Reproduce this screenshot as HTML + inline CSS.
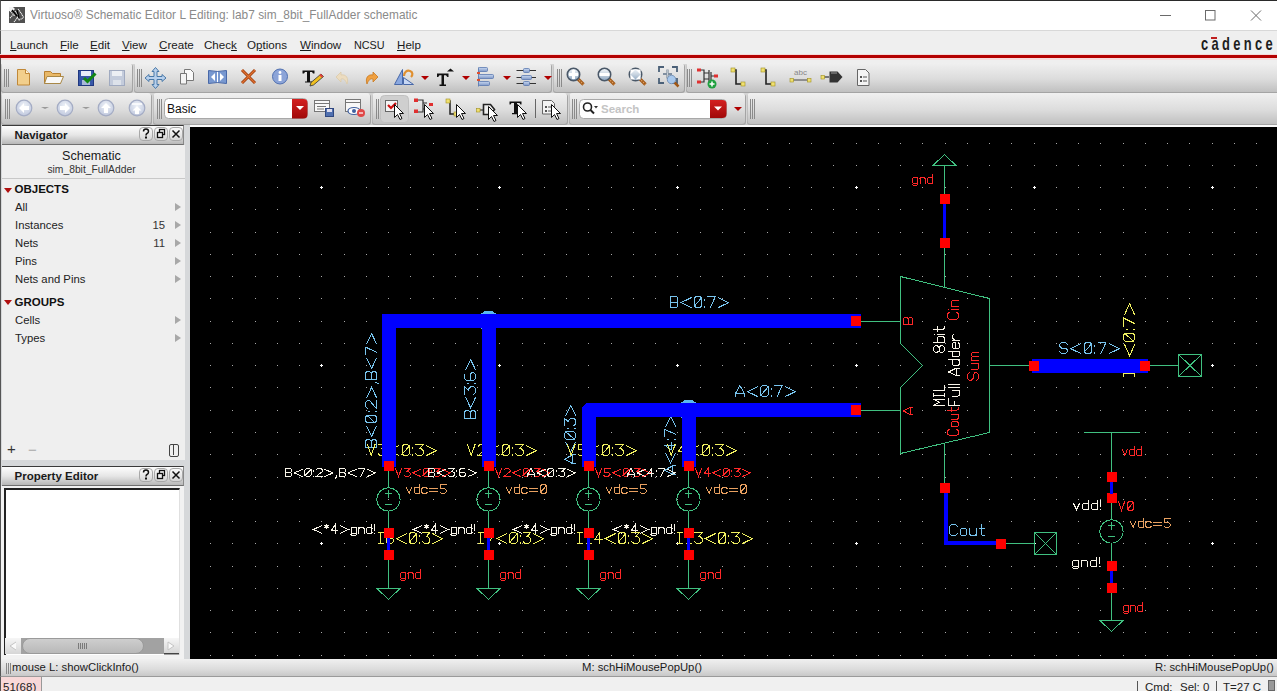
<!DOCTYPE html>
<html><head><meta charset="utf-8"><title>Virtuoso Schematic Editor</title>
<style>
*{box-sizing:border-box}
html,body{margin:0;padding:0}
body{width:1277px;height:691px;overflow:hidden;position:relative;background:#d4d4d4;font-family:"Liberation Sans",sans-serif;color:#222}
.a{position:absolute}
#title{left:0;top:0;width:1277px;height:30px;background:#fff;border-top:1px solid #2a2a2a;border-left:1px solid #555}
#title .t{left:29px;top:7px;font-size:11.85px;color:#8a8a8a;white-space:nowrap;letter-spacing:0.05px}
#menu{left:0;top:30px;width:1277px;height:25px;background:#efefef;border-left:1px solid #555;border-top:1px solid #d8d8d8}
#menu span{position:absolute;top:7px;font-size:11.6px;color:#1a1a1a;white-space:nowrap}
#redline{left:0;top:55px;width:1277px;height:3.5px;background:#b40000;box-shadow:0 -1px 0 #f4d8d8}
#tb{left:0;top:58px;width:1277px;height:69px;background:#d2d2d2;border-left:1px solid #555}
.grp{position:absolute;border-radius:3px;background:linear-gradient(#f4f4f4,#e6e6e6 45%,#d6d6d6);box-shadow:inset -1px -1px 0 #b4b4b4, inset 1px 1px 0 #fafafa}
.grip{position:absolute;width:5px;height:18px;border-left:1px solid #7a7a7a;border-right:1px solid #7a7a7a}
.grip:after{content:"";position:absolute;left:1px;top:0;width:1px;height:18px;background:#7a7a7a}
.ic{position:absolute}
#dock{left:0;top:125px;width:190px;height:534px;background:#d6d8da;border-left:1px solid #555}
.hdr{position:absolute;left:1px;width:182px;height:20px;border-right:1px solid #8a8a8a;background:linear-gradient(#fdfdfd,#e6e6e6 50%,#b8b8b8);border-top:1px solid #3a3a3a;border-bottom:1px solid #707070}
.hdr b{position:absolute;left:12.5px;top:3px;font-size:11.5px;color:#1a1a1a}
.hb{position:absolute;top:2px;width:14px;height:13px;border:1px solid #9a9a9a;border-radius:3px;background:linear-gradient(#fff,#d8d8d8);font-size:11px;line-height:11px;text-align:center;color:#111;font-weight:bold}
#nav{left:1px;top:20px;width:183px;height:315px;background:#efefef}
.it{position:absolute;left:13px;font-size:11.3px;color:#222;white-space:nowrap}
.num{position:absolute;left:148px;font-size:11.3px;color:#333;width:15px;text-align:right}
.arr{position:absolute;left:173px;width:0;height:0;border-top:4px solid transparent;border-bottom:4px solid transparent;border-left:6px solid #a8a8a8}
.sec{position:absolute;left:12.5px;font-size:11.5px;font-weight:bold;color:#111}
.tri{position:absolute;left:1.5px;width:0;height:0;border-left:4px solid transparent;border-right:4px solid transparent;border-top:5px solid #b01010}
#status{left:0;top:659px;width:1277px;height:18px;background:linear-gradient(#f0f0f0,#dcdcdc 60%,#c8c8c8);border-bottom:1px solid #9a9a9a;border-left:1px solid #555}
#status span{position:absolute;top:2px;font-size:11.3px;color:#1a1a1a;white-space:nowrap}
#bot{left:0;top:677px;width:1277px;height:14px;background:#f0f0f0;border-left:1px solid #555}
#bot span{position:absolute;top:4px;font-size:11.5px;color:#222;white-space:nowrap}
.cv{position:absolute;left:190px;top:127px}
</style></head><body>
<div id="title" class="a">
  <svg class="a" style="left:8px;top:6px" width="16" height="16" viewBox="0 0 16 16"><rect x="0" y="0" width="16" height="16" fill="#505050"/><path d="M0 0h4l2 2l-2 2l-4 0z" fill="#f4f4f4"/><path d="M1 4l5 5M1 11l4-4M5 15l4-5M6 4l4 6M9 2l3 4l3 5M8 10l2 3l4-2" stroke="#f0f0f0" stroke-width="1.1" stroke-dasharray="1.2 0.6" fill="none"/><path d="M3 3l5 6M8 3l2 8" stroke="#000" stroke-width="1.2"/></svg>
  <div class="a t">Virtuoso® Schematic Editor L Editing: lab7 sim_8bit_FullAdder schematic</div>
  <svg class="a" style="left:1159px;top:8px" width="110" height="14" viewBox="0 0 110 14"><path d="M0 6.5H11" stroke="#6a6a6a" stroke-width="1"/><rect x="45.5" y="1.5" width="9.5" height="9.5" stroke="#6a6a6a" fill="none"/><path d="M91 1.5L101 11.5M101 1.5L91 11.5" stroke="#6a6a6a" stroke-width="1"/></svg>
</div>
<div id="menu" class="a">
  <span style="left:9px"><u>L</u>aunch</span>
  <span style="left:59px"><u>F</u>ile</span>
  <span style="left:89px"><u>E</u>dit</span>
  <span style="left:121px"><u>V</u>iew</span>
  <span style="left:158px"><u>C</u>reate</span>
  <span style="left:203px">Chec<u>k</u></span>
  <span style="left:246px">O<u>p</u>tions</span>
  <span style="left:299px"><u>W</u>indow</span>
  <span style="left:353px;top:8px;font-size:10.8px">NCSU</span>
  <span style="left:396px"><u>H</u>elp</span>
  <span style="left:1200px;top:2px;font-size:19px;font-weight:bold;letter-spacing:4.9px;color:#1e1e1e;transform:scaleX(0.68);transform-origin:0 0">cadence</span><div class="a" style="left:1210px;top:6px;width:6px;height:2px;background:#c02020"></div>
</div>
<div id="redline" class="a"></div>
<svg class="a" style="left:0;top:58px" width="1277" height="69" viewBox="0 58 1277 69"><defs><linearGradient id="gg" x1="0" y1="0" x2="0" y2="1"><stop offset="0" stop-color="#f0f0f0"/><stop offset="0.55" stop-color="#dcdcdc"/><stop offset="1" stop-color="#c0c0c0"/></linearGradient><linearGradient id="gb" x1="0" y1="0" x2="0" y2="1"><stop offset="0" stop-color="#f4f4f4"/><stop offset="1" stop-color="#cfcfcf"/></linearGradient><linearGradient id="rb" x1="0" y1="0" x2="0" y2="1"><stop offset="0" stop-color="#d42020"/><stop offset="1" stop-color="#a00808"/></linearGradient><radialGradient id="cg" cx="0.5" cy="0.35" r="0.6"><stop offset="0" stop-color="#eef2f8"/><stop offset="1" stop-color="#c4cce0"/></radialGradient><linearGradient id="bl" x1="0" y1="0" x2="0" y2="1"><stop offset="0" stop-color="#c8d8f0"/><stop offset="1" stop-color="#8098c8"/></linearGradient></defs><rect x="0" y="58" width="1277" height="69" fill="#d4d4d4"/><rect x="0" y="58" width="1277" height="6" fill="#efefef"/><rect x="0" y="58" width="1277" height="2" fill="#f6dcdc"/><rect x="0" y="124" width="1277" height="3" fill="#c4c4c4"/><rect x="190" y="125" width="1087" height="2" fill="#fafafa"/><rect x="1" y="64" width="132" height="29" rx="3" fill="#a4a4a4"/><rect x="1.5" y="63" width="130.5" height="29" rx="3" fill="url(#gg)"/><rect x="134" y="64" width="418" height="29" rx="3" fill="#a4a4a4"/><rect x="134.5" y="63" width="416.5" height="29" rx="3" fill="url(#gg)"/><rect x="553" y="64" width="132" height="29" rx="3" fill="#a4a4a4"/><rect x="553.5" y="63" width="130.5" height="29" rx="3" fill="url(#gg)"/><rect x="686" y="64" width="595" height="29" rx="3" fill="#a4a4a4"/><rect x="686.5" y="63" width="593.5" height="29" rx="3" fill="url(#gg)"/><rect x="1" y="94" width="151" height="31" rx="3" fill="#a4a4a4"/><rect x="1.5" y="93" width="149.5" height="31" rx="3" fill="url(#gg)"/><rect x="153" y="94" width="218" height="31" rx="3" fill="#a4a4a4"/><rect x="153.5" y="93" width="216.5" height="31" rx="3" fill="url(#gg)"/><rect x="372" y="94" width="196" height="31" rx="3" fill="#a4a4a4"/><rect x="372.5" y="93" width="194.5" height="31" rx="3" fill="url(#gg)"/><rect x="569" y="94" width="177" height="31" rx="3" fill="#a4a4a4"/><rect x="569.5" y="93" width="175.5" height="31" rx="3" fill="url(#gg)"/><rect x="747" y="94" width="534" height="31" rx="3" fill="#a4a4a4"/><rect x="747.5" y="93" width="532.5" height="31" rx="3" fill="url(#gg)"/><path d="M4.5 69V87M6.5 69V87M8.5 69V87" stroke="#8a8a8a" stroke-width="1"/><path d="M137.5 69V87M139.5 69V87M141.5 69V87" stroke="#8a8a8a" stroke-width="1"/><path d="M557.5 69V87M559.5 69V87M561.5 69V87" stroke="#8a8a8a" stroke-width="1"/><path d="M687.5 69V87M689.5 69V87M691.5 69V87" stroke="#8a8a8a" stroke-width="1"/><path d="M5.5 99V119M7.5 99V119M9.5 99V119" stroke="#8a8a8a" stroke-width="1"/><path d="M157.5 99V119M159.5 99V119M161.5 99V119" stroke="#8a8a8a" stroke-width="1"/><path d="M376.5 99V119M378.5 99V119M380.5 99V119" stroke="#8a8a8a" stroke-width="1"/><path d="M572.5 99V119M574.5 99V119M576.5 99V119" stroke="#8a8a8a" stroke-width="1"/><path d="M750.5 99V119M752.5 99V119M754.5 99V119" stroke="#8a8a8a" stroke-width="1"/><rect x="0" y="58" width="1" height="69" fill="#555"/><path d="M17.5 69.5h8l4 4v11.5h-12z" fill="#f2cf8c" stroke="#c08838"/><path d="M25.5 69.5v4h4" fill="#fff3d8" stroke="#c08838"/><path d="M44.5 71.5h6l2 2h8v10h-16z" fill="#e8b868" stroke="#b88030"/><path d="M47 76.5h16.5l-3 7h-16z" fill="#f8f8f8" stroke="#a88848"/><rect x="78.5" y="70.5" width="15" height="15" fill="#3858a8" stroke="#203880"/><rect x="81" y="71" width="10" height="5" fill="#e8eef8"/><rect x="82" y="80" width="8" height="5" fill="#a8b8d8"/><path d="M84 78l3.5 3.5l8-8" stroke="#118811" stroke-width="3" fill="none"/><rect x="109.5" y="70.5" width="15" height="15" fill="#c4ccdc" stroke="#a0aac0"/><rect x="112" y="71" width="10" height="5" fill="#eceff4"/><rect x="113" y="80" width="8" height="5" fill="#dde2ea"/><path d="M155.5 67.5l3.5 4h-2v5h5v-2l4 3.5l-4 3.5v-2h-5v5h2l-3.5 4l-3.5-4h2v-5h-5v2l-4-3.5l4-3.5v2h5v-5h-2z" fill="#b8d0ec" stroke="#4878a8"/><path d="M184.5 69.5h6l3 3v8h-9z" fill="#fafafa" stroke="#777"/><path d="M180.5 73.5h6l0 0v10.5h-6z" fill="#f4f4f4" stroke="#777"/><path d="M208.5 70.5q9 2 18 0v13q-9-2-18 0z" fill="#7898d0" stroke="#4868a8"/><path d="M211 77l4-4v8zM224 77l-4-4v8z" fill="#fff"/><path d="M217.5 72v10" stroke="#fff"/><path d="M242 70l13 13M255 70l-13 13" stroke="#a04010" stroke-width="3"/><path d="M242 70l13 13M255 70l-13 13" stroke="#e07030" stroke-width="1.2"/><circle cx="280" cy="76.5" r="7.5" fill="#8ca4d8" stroke="#5070b0"/><rect x="278.5" y="75" width="3" height="6" fill="#fff"/><circle cx="280" cy="72.5" r="1.4" fill="#fff"/><path d="M302.5 70.5h12v3h-1.5l-1-1.5h-2v9.5h2v1h-7v-1h2v-9.5h-2l-1 1.5h-1.5z" fill="#111"/><path d="M310 86l1-3.5l10-8.5l2.5 2.5l-10 8.5z" fill="#f0c020" stroke="#303030" stroke-width="0.8"/><path d="M320 74.5l2.5 2.5" stroke="#e04040" stroke-width="2"/><path d="M347 84c2-6-1-10-6-9v-3l-5 5l5 5v-3c3-1 5 2 6 5z" fill="#ecdcc0" stroke="#dccaa8" stroke-width="0.8"/><path d="M367 84c-2-6 1-10 6-9v-3l5 5l-5 5v-3c-3-1-5 2-6 5z" fill="#f0a040" stroke="#c87820" stroke-width="0.8"/><path d="M394.5 84.5l8-15v15z" fill="#8aa8e0" stroke="#4868a8"/><path d="M403.5 84.5h10l-10-7z" fill="#c8d8f4" stroke="#4868a8"/><path d="M404 76c0-4 3-6 6-5s3 4 1 6" stroke="#e09030" stroke-width="2.2" fill="none"/><path d="M421 76h8l-4 4z" fill="#b00000"/><path d="M437 73.5h11.5v3.5h-1.2l-1.3-1.8h-2v9.3h2v1.5h-6.5v-1.5h2v-9.3h-2l-1.3 1.8h-1.2z" fill="#111"/><path d="M447 71.5l3.5-3l3.5 3z" fill="#111"/><path d="M462 76h8l-4 4z" fill="#b00000"/><path d="M478.5 67.5v19" stroke="#6080b0"/><rect x="478.5" y="67.5" width="9" height="4" rx="1" fill="url(#bl)" stroke="#5a78b0" stroke-width="0.8"/><rect x="478.5" y="74.5" width="15" height="4" rx="1" fill="url(#bl)" stroke="#5a78b0" stroke-width="0.8"/><rect x="478.5" y="81.5" width="11" height="4" rx="1" fill="url(#bl)" stroke="#5a78b0" stroke-width="0.8"/><rect x="477" y="72" width="3" height="2" fill="#e05030"/><rect x="477" y="79" width="3" height="2" fill="#e05030"/><path d="M503 76h8l-4 4z" fill="#b00000"/><path d="M516.5 70.5H536" stroke="#333"/><path d="M516.5 77.5H536" stroke="#333"/><path d="M516.5 83.5H536" stroke="#333"/><rect x="523.5" y="68.5" width="6" height="4" rx="1" fill="url(#bl)" stroke="#5a78b0" stroke-width="0.8"/><rect x="521.5" y="75.5" width="10" height="4" rx="1" fill="url(#bl)" stroke="#5a78b0" stroke-width="0.8"/><rect x="523.5" y="81.5" width="6" height="4" rx="1" fill="url(#bl)" stroke="#5a78b0" stroke-width="0.8"/><path d="M544 76h8l-4 4z" fill="#b00000"/><defs><linearGradient id="lens" x1="0" y1="0" x2="0" y2="1"><stop offset="0" stop-color="#f4f8fc"/><stop offset="0.5" stop-color="#c8d4e0"/><stop offset="1" stop-color="#8aa4c0"/></linearGradient></defs><path d="M577.5 78.5l6 6" stroke="#a05818" stroke-width="3.2"/><path d="M577.5 78.5l6 6" stroke="#e0a060" stroke-width="1.2" stroke-dasharray="1.5 1"/><circle cx="573.5" cy="74.5" r="6.2" fill="url(#lens)" stroke="#4a5868" stroke-width="1.6"/><path d="M569 74.5h9M573.5 70v9" stroke="#fff" stroke-width="3"/><path d="M608.5 78.5l6 6" stroke="#a05818" stroke-width="3.2"/><path d="M608.5 78.5l6 6" stroke="#e0a060" stroke-width="1.2" stroke-dasharray="1.5 1"/><circle cx="604.5" cy="74.5" r="6.2" fill="url(#lens)" stroke="#4a5868" stroke-width="1.6"/><path d="M599.5 74.5h10" stroke="#fff" stroke-width="3"/><path d="M639.5 78.5l6 6" stroke="#a05818" stroke-width="3.2"/><path d="M639.5 78.5l6 6" stroke="#e0a060" stroke-width="1.2" stroke-dasharray="1.5 1"/><circle cx="635.5" cy="74.5" r="6.2" fill="url(#lens)" stroke="#4a5868" stroke-width="1.6"/><path d="M631 70l3 0l-3 3zM640 70l-3 0l3 3zM631 79l3 0l-3-3zM640 79l-3 0l3-3z" fill="#fff" stroke="#fff" stroke-width="1.2"/><path d="M659 72v-5h5M672 67h5v5M677 78v5h-5M664 83h-5v-5" stroke="#4a6078" stroke-width="1.8" fill="none"/><path d="M663 74h9M667.5 69.5v9" stroke="#4a6078" stroke-width="1.8"/><path d="M663 74h9M667.5 69.5v9" stroke="#fff" stroke-width="0.6"/><path d="M674 82l4.5 4.5" stroke="#a05818" stroke-width="2.5"/><circle cx="671.5" cy="79.5" r="4.2" fill="#a8c8ec" stroke="#6888b0" stroke-width="0.8"/><path d="M698 70h6v12h-6M704 73h5M704 79h5M709 70v12M711 72v8M711 76h5" stroke="#333" stroke-width="1.2" fill="none"/><rect x="697" y="68.5" width="4" height="3" fill="#e03030"/><rect x="697" y="80.5" width="4" height="3" fill="#e03030"/><rect x="714" y="74.5" width="4" height="3" fill="#e03030"/><circle cx="712" cy="84" r="4.5" fill="#20a040"/><path d="M709.5 84h5M712 81.5v5" stroke="#fff" stroke-width="1.5"/><path d="M733 70h3v14h5" stroke="#222" stroke-width="1.6" fill="none"/><rect x="731" y="68" width="4" height="4" fill="#f0e070" stroke="#a09020" stroke-width="0.6"/><rect x="741" y="82" width="4" height="4" fill="#f0e070" stroke="#a09020" stroke-width="0.6"/><path d="M763 70h3v14h5" stroke="#222" stroke-width="1.6" fill="none"/><rect x="761" y="68" width="4" height="4" fill="#f0e070" stroke="#a09020" stroke-width="0.6"/><rect x="771" y="82" width="4" height="4" fill="#f0e070" stroke="#a09020" stroke-width="0.6"/><text x="800.5" y="75" font-size="8" text-anchor="middle" fill="#888" font-family="Liberation Sans">abc</text><path d="M792 80h17" stroke="#444"/><rect x="790" y="78.5" width="3.5" height="3.5" fill="#f0e070" stroke="#a09020" stroke-width="0.6"/><rect x="807.5" y="78.5" width="3.5" height="3.5" fill="#f0e070" stroke="#a09020" stroke-width="0.6"/><path d="M823 77h6" stroke="#333" stroke-width="1.2"/><rect x="821" y="75.5" width="3.5" height="3.5" fill="#f0e070" stroke="#a09020" stroke-width="0.6"/><path d="M829.5 71.5h8l5 5.5l-5 5.5h-8z" fill="#333"/><path d="M831 73h6" stroke="#999"/><path d="M857.5 69.5h8l3.5 3.5v12.5h-11.5z" fill="#f4f4f4" stroke="#666"/><rect x="860" y="76" width="2" height="2" fill="#555"/><rect x="860" y="80" width="2" height="2" fill="#555"/><path d="M863 77h4M863 81h4" stroke="#555"/><circle cx="24" cy="108" r="7.8" fill="url(#cg)" stroke="#a4acc4" stroke-width="1.2"/><path d="M19 108l5-5v3h5v4h-5v3z" fill="#fff"/><circle cx="65" cy="108" r="7.8" fill="url(#cg)" stroke="#a4acc4" stroke-width="1.2"/><path d="M70 108l-5-5v3h-5v4h5v3z" fill="#fff"/><circle cx="106" cy="108" r="7.8" fill="url(#cg)" stroke="#a4acc4" stroke-width="1.2"/><path d="M106 103l5 5h-3v5h-4v-5h-3z" fill="#fff"/><circle cx="137" cy="108" r="7.8" fill="url(#cg)" stroke="#a4acc4" stroke-width="1.2"/><path d="M137 106l4.5 4.5h-2.5v3.5h-4v-3.5h-2.5z" fill="#fff"/><path d="M132 104h10" stroke="#fff" stroke-width="1.5"/><path d="M41 107h8l-4 2z" fill="#999"/><path d="M82 107h8l-4 2z" fill="#999"/><rect x="164.5" y="98.5" width="143" height="20" rx="4" fill="#fff" stroke="#a8a8a8"/><path d="M292 99h11.5q4 0 4 4v11.5q0 4-4 4h-11.5z" fill="url(#rb)"/><path d="M296 106h8l-4 4z" fill="#fff"/><text x="167" y="113" font-size="12" fill="#111" font-family="Liberation Sans">Basic</text><rect x="314.5" y="100.5" width="15" height="11" fill="#f8f8f8" stroke="#777"/><path d="M315 103.5h14M317 106.5h9M317 109h7" stroke="#777"/><rect x="325.5" y="108.5" width="8" height="8" fill="#5070b0" stroke="#304880"/><rect x="327" y="109" width="5" height="3" fill="#dde"/><rect x="345.5" y="99.5" width="15" height="12" fill="#f8f8f8" stroke="#777"/><path d="M346 102.5h14" stroke="#777"/><ellipse cx="354" cy="111" rx="6" ry="3.5" fill="#fff" stroke="#4060a0" stroke-width="1.2"/><circle cx="354" cy="111" r="2" fill="#4060a0"/><circle cx="361" cy="113" r="4" fill="#e04848"/><path d="M359 113h4" stroke="#fff" stroke-width="1.2"/><rect x="380.5" y="95.5" width="28" height="27" rx="4" fill="#cfcfcf" stroke="#c0c0c0"/><rect x="385.5" y="100.5" width="12" height="11" fill="#f4f4f4" stroke="#666"/><path d="M388 105l3 3l5-5" stroke="#d01010" stroke-width="2.2" fill="none"/><path d="M394.5 104.5v13l3-3l2.5 5l2-1l-2.5-5h4z" fill="#fff" stroke="#111" stroke-width="1"/><path d="M417 100h6v12h-6M423 103h4M423 109h4" stroke="#333" stroke-width="1.2" fill="none"/><rect x="414" y="98.5" width="4" height="3.5" fill="#e03030"/><rect x="414" y="109.5" width="4" height="3.5" fill="#e03030"/><rect x="429" y="103" width="4" height="3" fill="#e03030"/><path d="M424.5 104.5v13l3-3l2.5 5l2-1l-2.5-5h4z" fill="#fff" stroke="#111" stroke-width="1"/><path d="M448 101h2v13h5" stroke="#222" stroke-width="1.5" fill="none"/><rect x="446" y="99" width="4" height="4" fill="#f0e070" stroke="#a09020" stroke-width="0.6"/><rect x="454" y="112" width="4" height="4" fill="#f0e070" stroke="#a09020" stroke-width="0.6"/><path d="M456.5 104.5v13l3-3l2.5 5l2-1l-2.5-5h4z" fill="#fff" stroke="#111" stroke-width="1"/><path d="M478 110h5" stroke="#333" stroke-width="1.2"/><rect x="476.5" y="108.5" width="3.5" height="3.5" fill="#f0e070" stroke="#a09020" stroke-width="0.6"/><path d="M483.5 104.5h7l4 5l-4 5h-7z" fill="#eee" stroke="#222" stroke-width="1.6"/><path d="M488.5 106.5v13l3-3l2.5 5l2-1l-2.5-5h4z" fill="#fff" stroke="#111" stroke-width="1"/><path d="M509.5 101.5h12v3h-1l-1-1.5h-2.5v10h2v1.2h-7v-1.2h2v-10h-2.5l-1 1.5h-1z" fill="#111"/><path d="M517.5 104.5v13l3-3l2.5 5l2-1l-2.5-5h4z" fill="#fff" stroke="#111" stroke-width="1"/><path d="M535.5 99v19" stroke="#666"/><path d="M542.5 100.5h9l3 3v10.5h-12z" fill="#f2f2f2" stroke="#666"/><rect x="545" y="106" width="2" height="2" fill="#555"/><rect x="545" y="110" width="2" height="2" fill="#555"/><path d="M548 107h4M548 111h4" stroke="#555"/><path d="M551.5 104.5v13l3-3l2.5 5l2-1l-2.5-5h4z" fill="#fff" stroke="#111" stroke-width="1"/><rect x="579.5" y="99.5" width="147" height="19" rx="4" fill="#fff" stroke="#a8a8a8"/><path d="M710 100h12.5q4 0 4 4v10q0 4-4 4h-12.5z" fill="url(#rb)"/><path d="M714 106.5h8l-4 4z" fill="#fff"/><circle cx="587.5" cy="107" r="4" fill="#fff" stroke="#222" stroke-width="1.6"/><path d="M590.5 110l3.5 3.5" stroke="#222" stroke-width="2"/><path d="M594 106h4l-2 2.5z" fill="#333"/><text x="601" y="112.5" font-size="11.5" font-weight="bold" fill="#c4c4c4" font-family="Liberation Sans">Search</text><path d="M734 107h8l-4 4z" fill="#b00000"/></svg>
<div id="dock" class="a">
  <div class="hdr" style="top:0"><b>Navigator</b>
    <svg class="a" style="left:136px;top:0px" width="46" height="16" viewBox="0 0 46 16"><defs><linearGradient id="hbg" x1="0" y1="0" x2="0" y2="1"><stop offset="0" stop-color="#fcfcfc"/><stop offset="1" stop-color="#d4d4d4"/></linearGradient></defs><rect x="1.5" y="1.5" width="13" height="13" rx="3.5" fill="url(#hbg)" stroke="#a8a8a8"/><rect x="16.5" y="1.5" width="13" height="13" rx="3.5" fill="url(#hbg)" stroke="#a8a8a8"/><rect x="31.5" y="1.5" width="13" height="13" rx="3.5" fill="url(#hbg)" stroke="#a8a8a8"/><path d="M5.5 5.5q0-2.5 2.5-2.5t2.5 2.3q0 1.5-1.5 2.2q-1 .5-1 2" stroke="#111" stroke-width="1.5" fill="none"/><rect x="7" y="10.5" width="2" height="2" fill="#111"/><rect x="21.5" y="3.5" width="5" height="5" fill="none" stroke="#111" stroke-width="1.3"/><rect x="19.5" y="6.5" width="5" height="5" fill="#f0f0f0" stroke="#111" stroke-width="1.3"/><path d="M34.5 4.5l7 7M41.5 4.5l-7 7" stroke="#111" stroke-width="1.5"/></svg></div>
  <div id="nav" class="a">
    <div class="a" style="left:-2px;top:4px;width:183px;text-align:center;font-size:12.6px;color:#1a1a1a">Schematic</div>
    <div class="a" style="left:-2px;top:19px;width:183px;text-align:center;font-size:10.3px;color:#333">sim_8bit_FullAdder</div>
    <div class="a" style="left:0;top:33px;width:183px;height:1px;background:#c8c8c8"></div>
    <div class="tri" style="top:43px"></div><div class="sec" style="top:38px">OBJECTS</div>
    <div class="it" style="top:56px">All</div><div class="arr" style="top:58px"></div>
    <div class="it" style="top:74px">Instances</div><div class="num" style="top:74px">15</div><div class="arr" style="top:76px"></div>
    <div class="it" style="top:92px">Nets</div><div class="num" style="top:92px">11</div><div class="arr" style="top:94px"></div>
    <div class="it" style="top:110px">Pins</div><div class="arr" style="top:112px"></div>
    <div class="it" style="top:128px">Nets and Pins</div><div class="arr" style="top:130px"></div>
    <div class="tri" style="top:155px"></div><div class="sec" style="top:151px">GROUPS</div>
    <div class="it" style="top:169px">Cells</div><div class="arr" style="top:171px"></div>
    <div class="it" style="top:187px">Types</div><div class="arr" style="top:189px"></div>
    <div class="a" style="left:5px;top:295px;font-size:15px;color:#333">+</div>
    <div class="a" style="left:26px;top:296px;font-size:15px;color:#aaa">&#x2212;</div>
    <div class="a" style="left:167px;top:299px;width:10px;height:13px;border:1.5px solid #444;border-radius:2px"><div class="a" style="left:3px;top:0;width:1.2px;height:10px;background:#444"></div></div>
  </div>
  <div class="hdr" style="top:341px"><b>Property Editor</b>
    <svg class="a" style="left:136px;top:0px" width="46" height="16" viewBox="0 0 46 16"><defs><linearGradient id="hbg" x1="0" y1="0" x2="0" y2="1"><stop offset="0" stop-color="#fcfcfc"/><stop offset="1" stop-color="#d4d4d4"/></linearGradient></defs><rect x="1.5" y="1.5" width="13" height="13" rx="3.5" fill="url(#hbg)" stroke="#a8a8a8"/><rect x="16.5" y="1.5" width="13" height="13" rx="3.5" fill="url(#hbg)" stroke="#a8a8a8"/><rect x="31.5" y="1.5" width="13" height="13" rx="3.5" fill="url(#hbg)" stroke="#a8a8a8"/><path d="M5.5 5.5q0-2.5 2.5-2.5t2.5 2.3q0 1.5-1.5 2.2q-1 .5-1 2" stroke="#111" stroke-width="1.5" fill="none"/><rect x="7" y="10.5" width="2" height="2" fill="#111"/><rect x="21.5" y="3.5" width="5" height="5" fill="none" stroke="#111" stroke-width="1.3"/><rect x="19.5" y="6.5" width="5" height="5" fill="#f0f0f0" stroke="#111" stroke-width="1.3"/><path d="M34.5 4.5l7 7M41.5 4.5l-7 7" stroke="#111" stroke-width="1.5"/></svg></div>
  <div class="a" style="left:0px;top:361px;width:183px;height:173px;background:#f2f2f2">
    <div class="a" style="left:3px;top:2px;width:176px;height:167px;background:#fff;border-top:2px solid #222;border-left:2px solid #222;border-right:1px solid #e0e0e0"></div>
    <svg class="a" style="left:4px;top:152px" width="174" height="17" viewBox="0 0 174 17">
      <defs><linearGradient id="sbb" x1="0" y1="0" x2="0" y2="1"><stop offset="0" stop-color="#f6f6f6"/><stop offset="1" stop-color="#d6d6d6"/></linearGradient>
      <linearGradient id="sbt" x1="0" y1="0" x2="0" y2="1"><stop offset="0" stop-color="#cfcfcf"/><stop offset="1" stop-color="#b8b8b8"/></linearGradient></defs>
      <rect x="0" y="0" width="174" height="16" fill="#a2a2a2"/>
      <rect x="0" y="0" width="16" height="16" fill="url(#sbb)"/>
      <path d="M11 4L5 8L11 12" fill="#fafafa" stroke="#c4c4c4"/>
      <rect x="17.5" y="0.5" width="121" height="15" rx="7.5" fill="url(#sbt)" stroke="#9a9a9a"/>
      <path d="M73.5 5v6M75.5 5v6M77.5 5v6M79.5 5v6M81.5 5v6" stroke="#7a7a7a"/>
      <rect x="159" y="0" width="15" height="15" fill="url(#sbb)"/><rect x="159" y="15" width="15" height="1.5" fill="#444"/>
      <path d="M163 4L169 8L163 12Z" fill="#fafafa" stroke="#c4c4c4"/>
    </svg>
  </div>
</div>
<svg class="cv" width="1087" height="532" viewBox="190 127 1087 532" shape-rendering="crispEdges"><rect x="190" y="127" width="1087" height="532" fill="#000"/><path d="M210 143h1v1h-1zM232 143h1v1h-1zM255 143h1v1h-1zM277 143h1v1h-1zM299 143h1v1h-1zM321 143h1v1h-1zM344 143h1v1h-1zM366 143h1v1h-1zM388 143h1v1h-1zM410 143h1v1h-1zM433 143h1v1h-1zM455 143h1v1h-1zM477 143h1v1h-1zM499 143h1v1h-1zM522 143h1v1h-1zM544 143h1v1h-1zM566 143h1v1h-1zM588 143h1v1h-1zM611 143h1v1h-1zM633 143h1v1h-1zM655 143h1v1h-1zM677 143h1v1h-1zM700 143h1v1h-1zM722 143h1v1h-1zM744 143h1v1h-1zM767 143h1v1h-1zM789 143h1v1h-1zM811 143h1v1h-1zM833 143h1v1h-1zM856 143h1v1h-1zM878 143h1v1h-1zM900 143h1v1h-1zM922 143h1v1h-1zM945 143h1v1h-1zM967 143h1v1h-1zM989 143h1v1h-1zM1011 143h1v1h-1zM1034 143h1v1h-1zM1056 143h1v1h-1zM1078 143h1v1h-1zM1100 143h1v1h-1zM1123 143h1v1h-1zM1145 143h1v1h-1zM1167 143h1v1h-1zM1189 143h1v1h-1zM1212 143h1v1h-1zM1234 143h1v1h-1zM1256 143h1v1h-1zM210 165h1v1h-1zM232 165h1v1h-1zM255 165h1v1h-1zM277 165h1v1h-1zM299 165h1v1h-1zM321 165h1v1h-1zM344 165h1v1h-1zM366 165h1v1h-1zM388 165h1v1h-1zM410 165h1v1h-1zM433 165h1v1h-1zM455 165h1v1h-1zM477 165h1v1h-1zM499 165h1v1h-1zM522 165h1v1h-1zM544 165h1v1h-1zM566 165h1v1h-1zM588 165h1v1h-1zM611 165h1v1h-1zM633 165h1v1h-1zM655 165h1v1h-1zM677 165h1v1h-1zM700 165h1v1h-1zM722 165h1v1h-1zM744 165h1v1h-1zM767 165h1v1h-1zM789 165h1v1h-1zM811 165h1v1h-1zM833 165h1v1h-1zM856 165h1v1h-1zM878 165h1v1h-1zM900 165h1v1h-1zM922 165h1v1h-1zM945 165h1v1h-1zM967 165h1v1h-1zM989 165h1v1h-1zM1011 165h1v1h-1zM1034 165h1v1h-1zM1056 165h1v1h-1zM1078 165h1v1h-1zM1100 165h1v1h-1zM1123 165h1v1h-1zM1145 165h1v1h-1zM1167 165h1v1h-1zM1189 165h1v1h-1zM1212 165h1v1h-1zM1234 165h1v1h-1zM1256 165h1v1h-1zM210 187h1v1h-1zM232 187h1v1h-1zM255 187h1v1h-1zM277 187h1v1h-1zM299 187h1v1h-1zM344 187h1v1h-1zM366 187h1v1h-1zM388 187h1v1h-1zM410 187h1v1h-1zM433 187h1v1h-1zM455 187h1v1h-1zM477 187h1v1h-1zM522 187h1v1h-1zM544 187h1v1h-1zM566 187h1v1h-1zM588 187h1v1h-1zM611 187h1v1h-1zM633 187h1v1h-1zM655 187h1v1h-1zM700 187h1v1h-1zM722 187h1v1h-1zM744 187h1v1h-1zM767 187h1v1h-1zM789 187h1v1h-1zM811 187h1v1h-1zM833 187h1v1h-1zM878 187h1v1h-1zM900 187h1v1h-1zM922 187h1v1h-1zM945 187h1v1h-1zM967 187h1v1h-1zM989 187h1v1h-1zM1011 187h1v1h-1zM1056 187h1v1h-1zM1078 187h1v1h-1zM1100 187h1v1h-1zM1123 187h1v1h-1zM1145 187h1v1h-1zM1167 187h1v1h-1zM1189 187h1v1h-1zM1234 187h1v1h-1zM1256 187h1v1h-1zM210 209h1v1h-1zM232 209h1v1h-1zM255 209h1v1h-1zM277 209h1v1h-1zM299 209h1v1h-1zM321 209h1v1h-1zM344 209h1v1h-1zM366 209h1v1h-1zM388 209h1v1h-1zM410 209h1v1h-1zM433 209h1v1h-1zM455 209h1v1h-1zM477 209h1v1h-1zM499 209h1v1h-1zM522 209h1v1h-1zM544 209h1v1h-1zM566 209h1v1h-1zM588 209h1v1h-1zM611 209h1v1h-1zM633 209h1v1h-1zM655 209h1v1h-1zM677 209h1v1h-1zM700 209h1v1h-1zM722 209h1v1h-1zM744 209h1v1h-1zM767 209h1v1h-1zM789 209h1v1h-1zM811 209h1v1h-1zM833 209h1v1h-1zM856 209h1v1h-1zM878 209h1v1h-1zM900 209h1v1h-1zM922 209h1v1h-1zM945 209h1v1h-1zM967 209h1v1h-1zM989 209h1v1h-1zM1011 209h1v1h-1zM1034 209h1v1h-1zM1056 209h1v1h-1zM1078 209h1v1h-1zM1100 209h1v1h-1zM1123 209h1v1h-1zM1145 209h1v1h-1zM1167 209h1v1h-1zM1189 209h1v1h-1zM1212 209h1v1h-1zM1234 209h1v1h-1zM1256 209h1v1h-1zM210 232h1v1h-1zM232 232h1v1h-1zM255 232h1v1h-1zM277 232h1v1h-1zM299 232h1v1h-1zM321 232h1v1h-1zM344 232h1v1h-1zM366 232h1v1h-1zM388 232h1v1h-1zM410 232h1v1h-1zM433 232h1v1h-1zM455 232h1v1h-1zM477 232h1v1h-1zM499 232h1v1h-1zM522 232h1v1h-1zM544 232h1v1h-1zM566 232h1v1h-1zM588 232h1v1h-1zM611 232h1v1h-1zM633 232h1v1h-1zM655 232h1v1h-1zM677 232h1v1h-1zM700 232h1v1h-1zM722 232h1v1h-1zM744 232h1v1h-1zM767 232h1v1h-1zM789 232h1v1h-1zM811 232h1v1h-1zM833 232h1v1h-1zM856 232h1v1h-1zM878 232h1v1h-1zM900 232h1v1h-1zM922 232h1v1h-1zM945 232h1v1h-1zM967 232h1v1h-1zM989 232h1v1h-1zM1011 232h1v1h-1zM1034 232h1v1h-1zM1056 232h1v1h-1zM1078 232h1v1h-1zM1100 232h1v1h-1zM1123 232h1v1h-1zM1145 232h1v1h-1zM1167 232h1v1h-1zM1189 232h1v1h-1zM1212 232h1v1h-1zM1234 232h1v1h-1zM1256 232h1v1h-1zM210 254h1v1h-1zM232 254h1v1h-1zM255 254h1v1h-1zM277 254h1v1h-1zM299 254h1v1h-1zM321 254h1v1h-1zM344 254h1v1h-1zM366 254h1v1h-1zM388 254h1v1h-1zM410 254h1v1h-1zM433 254h1v1h-1zM455 254h1v1h-1zM477 254h1v1h-1zM499 254h1v1h-1zM522 254h1v1h-1zM544 254h1v1h-1zM566 254h1v1h-1zM588 254h1v1h-1zM611 254h1v1h-1zM633 254h1v1h-1zM655 254h1v1h-1zM677 254h1v1h-1zM700 254h1v1h-1zM722 254h1v1h-1zM744 254h1v1h-1zM767 254h1v1h-1zM789 254h1v1h-1zM811 254h1v1h-1zM833 254h1v1h-1zM856 254h1v1h-1zM878 254h1v1h-1zM900 254h1v1h-1zM922 254h1v1h-1zM945 254h1v1h-1zM967 254h1v1h-1zM989 254h1v1h-1zM1011 254h1v1h-1zM1034 254h1v1h-1zM1056 254h1v1h-1zM1078 254h1v1h-1zM1100 254h1v1h-1zM1123 254h1v1h-1zM1145 254h1v1h-1zM1167 254h1v1h-1zM1189 254h1v1h-1zM1212 254h1v1h-1zM1234 254h1v1h-1zM1256 254h1v1h-1zM210 276h1v1h-1zM232 276h1v1h-1zM255 276h1v1h-1zM277 276h1v1h-1zM299 276h1v1h-1zM321 276h1v1h-1zM344 276h1v1h-1zM366 276h1v1h-1zM388 276h1v1h-1zM410 276h1v1h-1zM433 276h1v1h-1zM455 276h1v1h-1zM477 276h1v1h-1zM499 276h1v1h-1zM522 276h1v1h-1zM544 276h1v1h-1zM566 276h1v1h-1zM588 276h1v1h-1zM611 276h1v1h-1zM633 276h1v1h-1zM655 276h1v1h-1zM677 276h1v1h-1zM700 276h1v1h-1zM722 276h1v1h-1zM744 276h1v1h-1zM767 276h1v1h-1zM789 276h1v1h-1zM811 276h1v1h-1zM833 276h1v1h-1zM856 276h1v1h-1zM878 276h1v1h-1zM900 276h1v1h-1zM922 276h1v1h-1zM945 276h1v1h-1zM967 276h1v1h-1zM989 276h1v1h-1zM1011 276h1v1h-1zM1034 276h1v1h-1zM1056 276h1v1h-1zM1078 276h1v1h-1zM1100 276h1v1h-1zM1123 276h1v1h-1zM1145 276h1v1h-1zM1167 276h1v1h-1zM1189 276h1v1h-1zM1212 276h1v1h-1zM1234 276h1v1h-1zM1256 276h1v1h-1zM210 298h1v1h-1zM232 298h1v1h-1zM255 298h1v1h-1zM277 298h1v1h-1zM299 298h1v1h-1zM321 298h1v1h-1zM344 298h1v1h-1zM366 298h1v1h-1zM388 298h1v1h-1zM410 298h1v1h-1zM433 298h1v1h-1zM455 298h1v1h-1zM477 298h1v1h-1zM499 298h1v1h-1zM522 298h1v1h-1zM544 298h1v1h-1zM566 298h1v1h-1zM588 298h1v1h-1zM611 298h1v1h-1zM633 298h1v1h-1zM655 298h1v1h-1zM677 298h1v1h-1zM700 298h1v1h-1zM722 298h1v1h-1zM744 298h1v1h-1zM767 298h1v1h-1zM789 298h1v1h-1zM811 298h1v1h-1zM833 298h1v1h-1zM856 298h1v1h-1zM878 298h1v1h-1zM900 298h1v1h-1zM922 298h1v1h-1zM945 298h1v1h-1zM967 298h1v1h-1zM989 298h1v1h-1zM1011 298h1v1h-1zM1034 298h1v1h-1zM1056 298h1v1h-1zM1078 298h1v1h-1zM1100 298h1v1h-1zM1123 298h1v1h-1zM1145 298h1v1h-1zM1167 298h1v1h-1zM1189 298h1v1h-1zM1212 298h1v1h-1zM1234 298h1v1h-1zM1256 298h1v1h-1zM210 321h1v1h-1zM232 321h1v1h-1zM255 321h1v1h-1zM277 321h1v1h-1zM299 321h1v1h-1zM321 321h1v1h-1zM344 321h1v1h-1zM366 321h1v1h-1zM388 321h1v1h-1zM410 321h1v1h-1zM433 321h1v1h-1zM455 321h1v1h-1zM477 321h1v1h-1zM499 321h1v1h-1zM522 321h1v1h-1zM544 321h1v1h-1zM566 321h1v1h-1zM588 321h1v1h-1zM611 321h1v1h-1zM633 321h1v1h-1zM655 321h1v1h-1zM677 321h1v1h-1zM700 321h1v1h-1zM722 321h1v1h-1zM744 321h1v1h-1zM767 321h1v1h-1zM789 321h1v1h-1zM811 321h1v1h-1zM833 321h1v1h-1zM856 321h1v1h-1zM878 321h1v1h-1zM900 321h1v1h-1zM922 321h1v1h-1zM945 321h1v1h-1zM967 321h1v1h-1zM989 321h1v1h-1zM1011 321h1v1h-1zM1034 321h1v1h-1zM1056 321h1v1h-1zM1078 321h1v1h-1zM1100 321h1v1h-1zM1123 321h1v1h-1zM1145 321h1v1h-1zM1167 321h1v1h-1zM1189 321h1v1h-1zM1212 321h1v1h-1zM1234 321h1v1h-1zM1256 321h1v1h-1zM210 343h1v1h-1zM232 343h1v1h-1zM255 343h1v1h-1zM277 343h1v1h-1zM299 343h1v1h-1zM321 343h1v1h-1zM344 343h1v1h-1zM366 343h1v1h-1zM388 343h1v1h-1zM410 343h1v1h-1zM433 343h1v1h-1zM455 343h1v1h-1zM477 343h1v1h-1zM499 343h1v1h-1zM522 343h1v1h-1zM544 343h1v1h-1zM566 343h1v1h-1zM588 343h1v1h-1zM611 343h1v1h-1zM633 343h1v1h-1zM655 343h1v1h-1zM677 343h1v1h-1zM700 343h1v1h-1zM722 343h1v1h-1zM744 343h1v1h-1zM767 343h1v1h-1zM789 343h1v1h-1zM811 343h1v1h-1zM833 343h1v1h-1zM856 343h1v1h-1zM878 343h1v1h-1zM900 343h1v1h-1zM922 343h1v1h-1zM945 343h1v1h-1zM967 343h1v1h-1zM989 343h1v1h-1zM1011 343h1v1h-1zM1034 343h1v1h-1zM1056 343h1v1h-1zM1078 343h1v1h-1zM1100 343h1v1h-1zM1123 343h1v1h-1zM1145 343h1v1h-1zM1167 343h1v1h-1zM1189 343h1v1h-1zM1212 343h1v1h-1zM1234 343h1v1h-1zM1256 343h1v1h-1zM210 365h1v1h-1zM232 365h1v1h-1zM255 365h1v1h-1zM277 365h1v1h-1zM299 365h1v1h-1zM344 365h1v1h-1zM366 365h1v1h-1zM388 365h1v1h-1zM410 365h1v1h-1zM433 365h1v1h-1zM455 365h1v1h-1zM477 365h1v1h-1zM522 365h1v1h-1zM544 365h1v1h-1zM566 365h1v1h-1zM588 365h1v1h-1zM611 365h1v1h-1zM633 365h1v1h-1zM655 365h1v1h-1zM700 365h1v1h-1zM722 365h1v1h-1zM744 365h1v1h-1zM767 365h1v1h-1zM789 365h1v1h-1zM811 365h1v1h-1zM833 365h1v1h-1zM878 365h1v1h-1zM900 365h1v1h-1zM922 365h1v1h-1zM945 365h1v1h-1zM967 365h1v1h-1zM989 365h1v1h-1zM1011 365h1v1h-1zM1056 365h1v1h-1zM1078 365h1v1h-1zM1100 365h1v1h-1zM1123 365h1v1h-1zM1145 365h1v1h-1zM1167 365h1v1h-1zM1189 365h1v1h-1zM1234 365h1v1h-1zM1256 365h1v1h-1zM210 387h1v1h-1zM232 387h1v1h-1zM255 387h1v1h-1zM277 387h1v1h-1zM299 387h1v1h-1zM321 387h1v1h-1zM344 387h1v1h-1zM366 387h1v1h-1zM388 387h1v1h-1zM410 387h1v1h-1zM433 387h1v1h-1zM455 387h1v1h-1zM477 387h1v1h-1zM499 387h1v1h-1zM522 387h1v1h-1zM544 387h1v1h-1zM566 387h1v1h-1zM588 387h1v1h-1zM611 387h1v1h-1zM633 387h1v1h-1zM655 387h1v1h-1zM677 387h1v1h-1zM700 387h1v1h-1zM722 387h1v1h-1zM744 387h1v1h-1zM767 387h1v1h-1zM789 387h1v1h-1zM811 387h1v1h-1zM833 387h1v1h-1zM856 387h1v1h-1zM878 387h1v1h-1zM900 387h1v1h-1zM922 387h1v1h-1zM945 387h1v1h-1zM967 387h1v1h-1zM989 387h1v1h-1zM1011 387h1v1h-1zM1034 387h1v1h-1zM1056 387h1v1h-1zM1078 387h1v1h-1zM1100 387h1v1h-1zM1123 387h1v1h-1zM1145 387h1v1h-1zM1167 387h1v1h-1zM1189 387h1v1h-1zM1212 387h1v1h-1zM1234 387h1v1h-1zM1256 387h1v1h-1zM210 410h1v1h-1zM232 410h1v1h-1zM255 410h1v1h-1zM277 410h1v1h-1zM299 410h1v1h-1zM321 410h1v1h-1zM344 410h1v1h-1zM366 410h1v1h-1zM388 410h1v1h-1zM410 410h1v1h-1zM433 410h1v1h-1zM455 410h1v1h-1zM477 410h1v1h-1zM499 410h1v1h-1zM522 410h1v1h-1zM544 410h1v1h-1zM566 410h1v1h-1zM588 410h1v1h-1zM611 410h1v1h-1zM633 410h1v1h-1zM655 410h1v1h-1zM677 410h1v1h-1zM700 410h1v1h-1zM722 410h1v1h-1zM744 410h1v1h-1zM767 410h1v1h-1zM789 410h1v1h-1zM811 410h1v1h-1zM833 410h1v1h-1zM856 410h1v1h-1zM878 410h1v1h-1zM900 410h1v1h-1zM922 410h1v1h-1zM945 410h1v1h-1zM967 410h1v1h-1zM989 410h1v1h-1zM1011 410h1v1h-1zM1034 410h1v1h-1zM1056 410h1v1h-1zM1078 410h1v1h-1zM1100 410h1v1h-1zM1123 410h1v1h-1zM1145 410h1v1h-1zM1167 410h1v1h-1zM1189 410h1v1h-1zM1212 410h1v1h-1zM1234 410h1v1h-1zM1256 410h1v1h-1zM210 432h1v1h-1zM232 432h1v1h-1zM255 432h1v1h-1zM277 432h1v1h-1zM299 432h1v1h-1zM321 432h1v1h-1zM344 432h1v1h-1zM366 432h1v1h-1zM388 432h1v1h-1zM410 432h1v1h-1zM433 432h1v1h-1zM455 432h1v1h-1zM477 432h1v1h-1zM499 432h1v1h-1zM522 432h1v1h-1zM544 432h1v1h-1zM566 432h1v1h-1zM588 432h1v1h-1zM611 432h1v1h-1zM633 432h1v1h-1zM655 432h1v1h-1zM677 432h1v1h-1zM700 432h1v1h-1zM722 432h1v1h-1zM744 432h1v1h-1zM767 432h1v1h-1zM789 432h1v1h-1zM811 432h1v1h-1zM833 432h1v1h-1zM856 432h1v1h-1zM878 432h1v1h-1zM900 432h1v1h-1zM922 432h1v1h-1zM945 432h1v1h-1zM967 432h1v1h-1zM989 432h1v1h-1zM1011 432h1v1h-1zM1034 432h1v1h-1zM1056 432h1v1h-1zM1078 432h1v1h-1zM1100 432h1v1h-1zM1123 432h1v1h-1zM1145 432h1v1h-1zM1167 432h1v1h-1zM1189 432h1v1h-1zM1212 432h1v1h-1zM1234 432h1v1h-1zM1256 432h1v1h-1zM210 454h1v1h-1zM232 454h1v1h-1zM255 454h1v1h-1zM277 454h1v1h-1zM299 454h1v1h-1zM321 454h1v1h-1zM344 454h1v1h-1zM366 454h1v1h-1zM388 454h1v1h-1zM410 454h1v1h-1zM433 454h1v1h-1zM455 454h1v1h-1zM477 454h1v1h-1zM499 454h1v1h-1zM522 454h1v1h-1zM544 454h1v1h-1zM566 454h1v1h-1zM588 454h1v1h-1zM611 454h1v1h-1zM633 454h1v1h-1zM655 454h1v1h-1zM677 454h1v1h-1zM700 454h1v1h-1zM722 454h1v1h-1zM744 454h1v1h-1zM767 454h1v1h-1zM789 454h1v1h-1zM811 454h1v1h-1zM833 454h1v1h-1zM856 454h1v1h-1zM878 454h1v1h-1zM900 454h1v1h-1zM922 454h1v1h-1zM945 454h1v1h-1zM967 454h1v1h-1zM989 454h1v1h-1zM1011 454h1v1h-1zM1034 454h1v1h-1zM1056 454h1v1h-1zM1078 454h1v1h-1zM1100 454h1v1h-1zM1123 454h1v1h-1zM1145 454h1v1h-1zM1167 454h1v1h-1zM1189 454h1v1h-1zM1212 454h1v1h-1zM1234 454h1v1h-1zM1256 454h1v1h-1zM210 477h1v1h-1zM232 477h1v1h-1zM255 477h1v1h-1zM277 477h1v1h-1zM299 477h1v1h-1zM321 477h1v1h-1zM344 477h1v1h-1zM366 477h1v1h-1zM388 477h1v1h-1zM410 477h1v1h-1zM433 477h1v1h-1zM455 477h1v1h-1zM477 477h1v1h-1zM499 477h1v1h-1zM522 477h1v1h-1zM544 477h1v1h-1zM566 477h1v1h-1zM588 477h1v1h-1zM611 477h1v1h-1zM633 477h1v1h-1zM655 477h1v1h-1zM677 477h1v1h-1zM700 477h1v1h-1zM722 477h1v1h-1zM744 477h1v1h-1zM767 477h1v1h-1zM789 477h1v1h-1zM811 477h1v1h-1zM833 477h1v1h-1zM856 477h1v1h-1zM878 477h1v1h-1zM900 477h1v1h-1zM922 477h1v1h-1zM945 477h1v1h-1zM967 477h1v1h-1zM989 477h1v1h-1zM1011 477h1v1h-1zM1034 477h1v1h-1zM1056 477h1v1h-1zM1078 477h1v1h-1zM1100 477h1v1h-1zM1123 477h1v1h-1zM1145 477h1v1h-1zM1167 477h1v1h-1zM1189 477h1v1h-1zM1212 477h1v1h-1zM1234 477h1v1h-1zM1256 477h1v1h-1zM210 499h1v1h-1zM232 499h1v1h-1zM255 499h1v1h-1zM277 499h1v1h-1zM299 499h1v1h-1zM321 499h1v1h-1zM344 499h1v1h-1zM366 499h1v1h-1zM388 499h1v1h-1zM410 499h1v1h-1zM433 499h1v1h-1zM455 499h1v1h-1zM477 499h1v1h-1zM499 499h1v1h-1zM522 499h1v1h-1zM544 499h1v1h-1zM566 499h1v1h-1zM588 499h1v1h-1zM611 499h1v1h-1zM633 499h1v1h-1zM655 499h1v1h-1zM677 499h1v1h-1zM700 499h1v1h-1zM722 499h1v1h-1zM744 499h1v1h-1zM767 499h1v1h-1zM789 499h1v1h-1zM811 499h1v1h-1zM833 499h1v1h-1zM856 499h1v1h-1zM878 499h1v1h-1zM900 499h1v1h-1zM922 499h1v1h-1zM945 499h1v1h-1zM967 499h1v1h-1zM989 499h1v1h-1zM1011 499h1v1h-1zM1034 499h1v1h-1zM1056 499h1v1h-1zM1078 499h1v1h-1zM1100 499h1v1h-1zM1123 499h1v1h-1zM1145 499h1v1h-1zM1167 499h1v1h-1zM1189 499h1v1h-1zM1212 499h1v1h-1zM1234 499h1v1h-1zM1256 499h1v1h-1zM210 521h1v1h-1zM232 521h1v1h-1zM255 521h1v1h-1zM277 521h1v1h-1zM299 521h1v1h-1zM321 521h1v1h-1zM344 521h1v1h-1zM366 521h1v1h-1zM388 521h1v1h-1zM410 521h1v1h-1zM433 521h1v1h-1zM455 521h1v1h-1zM477 521h1v1h-1zM499 521h1v1h-1zM522 521h1v1h-1zM544 521h1v1h-1zM566 521h1v1h-1zM588 521h1v1h-1zM611 521h1v1h-1zM633 521h1v1h-1zM655 521h1v1h-1zM677 521h1v1h-1zM700 521h1v1h-1zM722 521h1v1h-1zM744 521h1v1h-1zM767 521h1v1h-1zM789 521h1v1h-1zM811 521h1v1h-1zM833 521h1v1h-1zM856 521h1v1h-1zM878 521h1v1h-1zM900 521h1v1h-1zM922 521h1v1h-1zM945 521h1v1h-1zM967 521h1v1h-1zM989 521h1v1h-1zM1011 521h1v1h-1zM1034 521h1v1h-1zM1056 521h1v1h-1zM1078 521h1v1h-1zM1100 521h1v1h-1zM1123 521h1v1h-1zM1145 521h1v1h-1zM1167 521h1v1h-1zM1189 521h1v1h-1zM1212 521h1v1h-1zM1234 521h1v1h-1zM1256 521h1v1h-1zM210 543h1v1h-1zM232 543h1v1h-1zM255 543h1v1h-1zM277 543h1v1h-1zM299 543h1v1h-1zM344 543h1v1h-1zM366 543h1v1h-1zM388 543h1v1h-1zM410 543h1v1h-1zM433 543h1v1h-1zM455 543h1v1h-1zM477 543h1v1h-1zM522 543h1v1h-1zM544 543h1v1h-1zM566 543h1v1h-1zM588 543h1v1h-1zM611 543h1v1h-1zM633 543h1v1h-1zM655 543h1v1h-1zM700 543h1v1h-1zM722 543h1v1h-1zM744 543h1v1h-1zM767 543h1v1h-1zM789 543h1v1h-1zM811 543h1v1h-1zM833 543h1v1h-1zM878 543h1v1h-1zM900 543h1v1h-1zM922 543h1v1h-1zM945 543h1v1h-1zM967 543h1v1h-1zM989 543h1v1h-1zM1011 543h1v1h-1zM1056 543h1v1h-1zM1078 543h1v1h-1zM1100 543h1v1h-1zM1123 543h1v1h-1zM1145 543h1v1h-1zM1167 543h1v1h-1zM1189 543h1v1h-1zM1234 543h1v1h-1zM1256 543h1v1h-1zM210 566h1v1h-1zM232 566h1v1h-1zM255 566h1v1h-1zM277 566h1v1h-1zM299 566h1v1h-1zM321 566h1v1h-1zM344 566h1v1h-1zM366 566h1v1h-1zM388 566h1v1h-1zM410 566h1v1h-1zM433 566h1v1h-1zM455 566h1v1h-1zM477 566h1v1h-1zM499 566h1v1h-1zM522 566h1v1h-1zM544 566h1v1h-1zM566 566h1v1h-1zM588 566h1v1h-1zM611 566h1v1h-1zM633 566h1v1h-1zM655 566h1v1h-1zM677 566h1v1h-1zM700 566h1v1h-1zM722 566h1v1h-1zM744 566h1v1h-1zM767 566h1v1h-1zM789 566h1v1h-1zM811 566h1v1h-1zM833 566h1v1h-1zM856 566h1v1h-1zM878 566h1v1h-1zM900 566h1v1h-1zM922 566h1v1h-1zM945 566h1v1h-1zM967 566h1v1h-1zM989 566h1v1h-1zM1011 566h1v1h-1zM1034 566h1v1h-1zM1056 566h1v1h-1zM1078 566h1v1h-1zM1100 566h1v1h-1zM1123 566h1v1h-1zM1145 566h1v1h-1zM1167 566h1v1h-1zM1189 566h1v1h-1zM1212 566h1v1h-1zM1234 566h1v1h-1zM1256 566h1v1h-1zM210 588h1v1h-1zM232 588h1v1h-1zM255 588h1v1h-1zM277 588h1v1h-1zM299 588h1v1h-1zM321 588h1v1h-1zM344 588h1v1h-1zM366 588h1v1h-1zM388 588h1v1h-1zM410 588h1v1h-1zM433 588h1v1h-1zM455 588h1v1h-1zM477 588h1v1h-1zM499 588h1v1h-1zM522 588h1v1h-1zM544 588h1v1h-1zM566 588h1v1h-1zM588 588h1v1h-1zM611 588h1v1h-1zM633 588h1v1h-1zM655 588h1v1h-1zM677 588h1v1h-1zM700 588h1v1h-1zM722 588h1v1h-1zM744 588h1v1h-1zM767 588h1v1h-1zM789 588h1v1h-1zM811 588h1v1h-1zM833 588h1v1h-1zM856 588h1v1h-1zM878 588h1v1h-1zM900 588h1v1h-1zM922 588h1v1h-1zM945 588h1v1h-1zM967 588h1v1h-1zM989 588h1v1h-1zM1011 588h1v1h-1zM1034 588h1v1h-1zM1056 588h1v1h-1zM1078 588h1v1h-1zM1100 588h1v1h-1zM1123 588h1v1h-1zM1145 588h1v1h-1zM1167 588h1v1h-1zM1189 588h1v1h-1zM1212 588h1v1h-1zM1234 588h1v1h-1zM1256 588h1v1h-1zM210 610h1v1h-1zM232 610h1v1h-1zM255 610h1v1h-1zM277 610h1v1h-1zM299 610h1v1h-1zM321 610h1v1h-1zM344 610h1v1h-1zM366 610h1v1h-1zM388 610h1v1h-1zM410 610h1v1h-1zM433 610h1v1h-1zM455 610h1v1h-1zM477 610h1v1h-1zM499 610h1v1h-1zM522 610h1v1h-1zM544 610h1v1h-1zM566 610h1v1h-1zM588 610h1v1h-1zM611 610h1v1h-1zM633 610h1v1h-1zM655 610h1v1h-1zM677 610h1v1h-1zM700 610h1v1h-1zM722 610h1v1h-1zM744 610h1v1h-1zM767 610h1v1h-1zM789 610h1v1h-1zM811 610h1v1h-1zM833 610h1v1h-1zM856 610h1v1h-1zM878 610h1v1h-1zM900 610h1v1h-1zM922 610h1v1h-1zM945 610h1v1h-1zM967 610h1v1h-1zM989 610h1v1h-1zM1011 610h1v1h-1zM1034 610h1v1h-1zM1056 610h1v1h-1zM1078 610h1v1h-1zM1100 610h1v1h-1zM1123 610h1v1h-1zM1145 610h1v1h-1zM1167 610h1v1h-1zM1189 610h1v1h-1zM1212 610h1v1h-1zM1234 610h1v1h-1zM1256 610h1v1h-1zM210 632h1v1h-1zM232 632h1v1h-1zM255 632h1v1h-1zM277 632h1v1h-1zM299 632h1v1h-1zM321 632h1v1h-1zM344 632h1v1h-1zM366 632h1v1h-1zM388 632h1v1h-1zM410 632h1v1h-1zM433 632h1v1h-1zM455 632h1v1h-1zM477 632h1v1h-1zM499 632h1v1h-1zM522 632h1v1h-1zM544 632h1v1h-1zM566 632h1v1h-1zM588 632h1v1h-1zM611 632h1v1h-1zM633 632h1v1h-1zM655 632h1v1h-1zM677 632h1v1h-1zM700 632h1v1h-1zM722 632h1v1h-1zM744 632h1v1h-1zM767 632h1v1h-1zM789 632h1v1h-1zM811 632h1v1h-1zM833 632h1v1h-1zM856 632h1v1h-1zM878 632h1v1h-1zM900 632h1v1h-1zM922 632h1v1h-1zM945 632h1v1h-1zM967 632h1v1h-1zM989 632h1v1h-1zM1011 632h1v1h-1zM1034 632h1v1h-1zM1056 632h1v1h-1zM1078 632h1v1h-1zM1100 632h1v1h-1zM1123 632h1v1h-1zM1145 632h1v1h-1zM1167 632h1v1h-1zM1189 632h1v1h-1zM1212 632h1v1h-1zM1234 632h1v1h-1zM1256 632h1v1h-1zM210 655h1v1h-1zM232 655h1v1h-1zM255 655h1v1h-1zM277 655h1v1h-1zM299 655h1v1h-1zM321 655h1v1h-1zM344 655h1v1h-1zM366 655h1v1h-1zM388 655h1v1h-1zM410 655h1v1h-1zM433 655h1v1h-1zM455 655h1v1h-1zM477 655h1v1h-1zM499 655h1v1h-1zM522 655h1v1h-1zM544 655h1v1h-1zM566 655h1v1h-1zM588 655h1v1h-1zM611 655h1v1h-1zM633 655h1v1h-1zM655 655h1v1h-1zM677 655h1v1h-1zM700 655h1v1h-1zM722 655h1v1h-1zM744 655h1v1h-1zM767 655h1v1h-1zM789 655h1v1h-1zM811 655h1v1h-1zM833 655h1v1h-1zM856 655h1v1h-1zM878 655h1v1h-1zM900 655h1v1h-1zM922 655h1v1h-1zM945 655h1v1h-1zM967 655h1v1h-1zM989 655h1v1h-1zM1011 655h1v1h-1zM1034 655h1v1h-1zM1056 655h1v1h-1zM1078 655h1v1h-1zM1100 655h1v1h-1zM1123 655h1v1h-1zM1145 655h1v1h-1zM1167 655h1v1h-1zM1189 655h1v1h-1zM1212 655h1v1h-1zM1234 655h1v1h-1zM1256 655h1v1h-1z" fill="#a8a8a8"/><path d="M320 187h3v1h-3zM321 186h1v3h-1zM498 187h3v1h-3zM499 186h1v3h-1zM676 187h3v1h-3zM677 186h1v3h-1zM855 187h3v1h-3zM856 186h1v3h-1zM1033 187h3v1h-3zM1034 186h1v3h-1zM1211 187h3v1h-3zM1212 186h1v3h-1zM320 365h3v1h-3zM321 364h1v3h-1zM498 365h3v1h-3zM499 364h1v3h-1zM676 365h3v1h-3zM677 364h1v3h-1zM855 365h3v1h-3zM856 364h1v3h-1zM1033 365h3v1h-3zM1034 364h1v3h-1zM1211 365h3v1h-3zM1212 364h1v3h-1zM320 543h3v1h-3zM321 542h1v3h-1zM498 543h3v1h-3zM499 542h1v3h-1zM676 543h3v1h-3zM677 542h1v3h-1zM855 543h3v1h-3zM856 542h1v3h-1zM1033 543h3v1h-3zM1034 542h1v3h-1zM1211 543h3v1h-3zM1212 542h1v3h-1z" fill="#ffffff"/><path d="M670.5 296.5L670.5 307.5L676.74 307.5L677.98 306.28L677.98 303.83L676.74 302L670.5 302M670.5 296.5L676.74 296.5L677.98 297.72L677.98 300.78L676.74 302M691.08 297.72L681.1 302.61L691.08 307.5M696.07 296.5L699.81 296.5L701.68 298.33L701.68 305.67L699.81 307.5L696.07 307.5L694.2 305.67L694.2 298.33L696.07 296.5M701.68 297.72L694.2 306.28M704.8 299.56L704.8 300.17M704.8 306.89L704.8 307.5M707.92 296.5L715.4 296.5L710.41 307.5M718.52 297.72L728.5 302.61L718.52 307.5" stroke="#78c4ee" fill="none" stroke-width="1" stroke-linecap="square"/><path d="M735.5 396.5L735.5 393.44L739.92 385.5L744.34 393.44L744.34 396.5M735.5 393.44L744.34 393.44M757.61 386.72L747.5 391.61L757.61 396.5M762.66 385.5L766.45 385.5L768.34 387.33L768.34 394.67L766.45 396.5L762.66 396.5L760.76 394.67L760.76 387.33L762.66 385.5M768.34 386.72L760.76 395.28M771.5 388.56L771.5 389.17M771.5 395.89L771.5 396.5M774.66 385.5L782.24 385.5L777.18 396.5M785.39 386.72L795.5 391.61L785.39 396.5" stroke="#78c4ee" fill="none" stroke-width="1" stroke-linecap="square"/><path d="M1067.24 344.33L1065.31 342.5L1061.44 342.5L1059.5 344.33L1059.5 346.17L1061.44 348L1065.31 348L1067.24 349.83L1067.24 351.67L1065.31 353.5L1061.44 353.5L1059.5 351.67M1080.79 343.72L1070.47 348.61L1080.79 353.5M1085.95 342.5L1089.82 342.5L1091.76 344.33L1091.76 351.67L1089.82 353.5L1085.95 353.5L1084.02 351.67L1084.02 344.33L1085.95 342.5M1091.76 343.72L1084.02 352.28M1094.98 345.56L1094.98 346.17M1094.98 352.89L1094.98 353.5M1098.21 342.5L1105.95 342.5L1100.79 353.5M1109.18 343.72L1119.5 348.61L1109.18 353.5" stroke="#78c4ee" fill="none" stroke-width="1" stroke-linecap="square"/><path d="M957.14 526.33L955.23 524.5L951.41 524.5L949.5 526.33L949.5 533.67L951.41 535.5L955.23 535.5L957.14 533.67M961.59 528.17L965.41 528.17L966.68 529.39L966.68 534.28L965.41 535.5L961.59 535.5L960.32 534.28L960.32 529.39L961.59 528.17M969.86 528.17L969.86 534.28L971.14 535.5L974.95 535.5L976.23 534.28M976.23 528.17L976.23 535.5M981.32 524.5L981.32 534.28L982.59 535.5L984.5 535.5M979.41 528.17L984.5 528.17" stroke="#78c4ee" fill="none" stroke-width="1" stroke-linecap="square"/><path d="M365.5 447.5L376.5 447.5L376.5 441.02L375.28 439.73L372.83 439.73L371 441.02L371 447.5M365.5 447.5L365.5 441.02L366.72 439.73L369.78 439.73L371 441.02M366.72 426.12L371.61 436.49L376.5 426.12M365.5 420.94L365.5 417.06L367.33 415.11L374.67 415.11L376.5 417.06L376.5 420.94L374.67 422.89L367.33 422.89L365.5 420.94M366.72 415.11L375.28 422.89M368.56 411.88L369.17 411.88M375.89 411.88L376.5 411.88M367.33 408.64L365.5 406.69L365.5 402.81L367.33 400.86L369.78 400.86L376.5 408.64L376.5 400.86M366.72 397.62L371.61 387.26L376.5 397.62M375.28 382.73L376.5 382.73L378.94 384.02M365.5 379.49L376.5 379.49L376.5 373.01L375.28 371.72L372.83 371.72L371 373.01L371 379.49M365.5 379.49L365.5 373.01L366.72 371.72L369.78 371.72L371 373.01M366.72 358.11L371.61 368.48L376.5 358.11M365.5 354.88L365.5 347.1L376.5 352.28M366.72 343.86L371.61 333.5L376.5 343.86" stroke="#78c4ee" fill="none" stroke-width="1" stroke-linecap="square"/><path d="M464.5 418.5L475.5 418.5L475.5 412.16L474.28 410.89L471.83 410.89L470 412.16L470 418.5M464.5 418.5L464.5 412.16L465.72 410.89L468.78 410.89L470 412.16M465.72 397.56L470.61 407.72L475.5 397.56M464.5 394.39L464.5 386.78L468.78 390.59L468.78 388.68L470.61 386.78L473.67 386.78L475.5 388.68L475.5 392.49L473.67 394.39M467.56 383.61L468.17 383.61M474.89 383.61L475.5 383.61M464.5 374.09L464.5 378.53L466.33 380.44L473.67 380.44L475.5 378.53L475.5 374.73L473.67 372.82L471.83 372.82L470 374.73L470 380.44M465.72 369.65L470.61 359.5L475.5 369.65" stroke="#78c4ee" fill="none" stroke-width="1" stroke-linecap="square"/><path d="M575.5 463.5L572.44 463.5L564.5 459.23L572.44 454.95L575.5 454.95M572.44 463.5L572.44 454.95M565.72 442.13L570.61 451.9L575.5 442.13M564.5 437.25L564.5 433.58L566.33 431.75L573.67 431.75L575.5 433.58L575.5 437.25L573.67 439.08L566.33 439.08L564.5 437.25M565.72 431.75L574.28 439.08M567.56 428.7L568.17 428.7M574.89 428.7L575.5 428.7M564.5 425.65L564.5 418.32L568.78 421.98L568.78 420.15L570.61 418.32L573.67 418.32L575.5 420.15L575.5 423.82L573.67 425.65M565.72 415.27L570.61 405.5L575.5 415.27" stroke="#78c4ee" fill="none" stroke-width="1" stroke-linecap="square"/><path d="M675.5 474.5L672.44 474.5L664.5 470.23L672.44 465.95L675.5 465.95M672.44 474.5L672.44 465.95M665.72 453.13L670.61 462.9L675.5 453.13M675.5 445.19L664.5 445.19L671.83 450.08L671.83 442.75M667.56 439.7L668.17 439.7M674.89 439.7L675.5 439.7M664.5 436.65L664.5 429.32L675.5 434.21M665.72 426.27L670.61 416.5L675.5 426.27" stroke="#78c4ee" fill="none" stroke-width="1" stroke-linecap="square"/><path d="M395.5 468.5L398.5 476.5L401.5 468.5M404 468.5L410 468.5L407 471.61L408.5 471.61L410 472.94L410 475.17L408.5 476.5L405.5 476.5L404 475.17M420.5 469.39L412.5 472.94L420.5 476.5M424.5 468.5L427.5 468.5L429 469.83L429 475.17L427.5 476.5L424.5 476.5L423 475.17L423 469.83L424.5 468.5M429 469.39L423 475.61M431.5 470.72L431.5 471.17M431.5 476.06L431.5 476.5M434 468.5L440 468.5L437 471.61L438.5 471.61L440 472.94L440 475.17L438.5 476.5L435.5 476.5L434 475.17M442.5 469.39L450.5 472.94L442.5 476.5" stroke="#ff2828" fill="none" stroke-width="1" stroke-linecap="square"/><path d="M495.5 468.5L498.5 476.5L501.5 468.5M504 469.83L505.5 468.5L508.5 468.5L510 469.83L510 471.61L504 476.5L510 476.5M520.5 469.39L512.5 472.94L520.5 476.5M524.5 468.5L527.5 468.5L529 469.83L529 475.17L527.5 476.5L524.5 476.5L523 475.17L523 469.83L524.5 468.5M529 469.39L523 475.61M531.5 470.72L531.5 471.17M531.5 476.06L531.5 476.5M534 468.5L540 468.5L537 471.61L538.5 471.61L540 472.94L540 475.17L538.5 476.5L535.5 476.5L534 475.17M542.5 469.39L550.5 472.94L542.5 476.5" stroke="#ff2828" fill="none" stroke-width="1" stroke-linecap="square"/><path d="M595.5 468.5L598.5 476.5L601.5 468.5M610 468.5L604 468.5L604 472.06L608 472.06L610 473.83L610 474.72L608 476.5L605 476.5L604 475.61M620.5 469.39L612.5 472.94L620.5 476.5M624.5 468.5L627.5 468.5L629 469.83L629 475.17L627.5 476.5L624.5 476.5L623 475.17L623 469.83L624.5 468.5M629 469.39L623 475.61M631.5 470.72L631.5 471.17M631.5 476.06L631.5 476.5M634 468.5L640 468.5L637 471.61L638.5 471.61L640 472.94L640 475.17L638.5 476.5L635.5 476.5L634 475.17M642.5 469.39L650.5 472.94L642.5 476.5" stroke="#ff2828" fill="none" stroke-width="1" stroke-linecap="square"/><path d="M695.5 468.5L698.5 476.5L701.5 468.5M708 476.5L708 468.5L704 473.83L710 473.83M720.5 469.39L712.5 472.94L720.5 476.5M724.5 468.5L727.5 468.5L729 469.83L729 475.17L727.5 476.5L724.5 476.5L723 475.17L723 469.83L724.5 468.5M729 469.39L723 475.61M731.5 470.72L731.5 471.17M731.5 476.06L731.5 476.5M734 468.5L740 468.5L737 471.61L738.5 471.61L740 472.94L740 475.17L738.5 476.5L735.5 476.5L734 475.17M742.5 469.39L750.5 472.94L742.5 476.5" stroke="#ff2828" fill="none" stroke-width="1" stroke-linecap="square"/><path d="M367.5 444.5L371.26 455.5L375.03 444.5M378.16 444.5L385.69 444.5L381.93 448.78L383.81 448.78L385.69 450.61L385.69 453.67L383.81 455.5L380.05 455.5L378.16 453.67M398.86 445.72L388.83 450.61L398.86 455.5M403.88 444.5L407.65 444.5L409.53 446.33L409.53 453.67L407.65 455.5L403.88 455.5L402 453.67L402 446.33L403.88 444.5M409.53 445.72L402 454.28M412.66 447.56L412.66 448.17M412.66 454.89L412.66 455.5M415.8 444.5L423.33 444.5L419.56 448.78L421.45 448.78L423.33 450.61L423.33 453.67L421.45 455.5L417.68 455.5L415.8 453.67M426.46 445.72L436.5 450.61L426.46 455.5" stroke="#f0f060" fill="none" stroke-width="1" stroke-linecap="square"/><path d="M406.5 487.5L409.06 493.5L411.63 487.5M419.32 484.5L419.32 493.5M419.32 488.5L418.29 487.5L415.22 487.5L414.19 488.5L414.19 492.5L415.22 493.5L418.29 493.5L419.32 492.5M427.01 488.5L425.99 487.5L422.91 487.5L421.88 488.5L421.88 492.5L422.91 493.5L425.99 493.5L427.01 492.5M429.58 488.5L437.78 488.5M429.58 491.5L437.78 491.5M446.5 484.5L440.35 484.5L440.35 488.5L444.45 488.5L446.5 490.5L446.5 491.5L444.45 493.5L441.37 493.5L440.35 492.5" stroke="#e8a060" fill="none" stroke-width="1" stroke-linecap="square"/><path d="M321.84 525.5L313.5 529.5L321.84 533.5M326.53 524.5L326.53 528.5M324.45 525.5L328.62 527.5M324.45 527.5L328.62 525.5M335.4 533.5L335.4 524.5L331.23 530.5L337.48 530.5M340.09 525.5L348.43 529.5L340.09 533.5M356.25 527.5L356.25 534.5L355.21 535.5L352.08 535.5L351.04 534.5M356.25 528.5L355.21 527.5L352.08 527.5L351.04 528.5L351.04 532.5L352.08 533.5L355.21 533.5L356.25 532.5M358.86 527.5L358.86 533.5M358.86 528.5L359.9 527.5L363.03 527.5L364.07 528.5L364.07 533.5M371.89 524.5L371.89 533.5M371.89 528.5L370.85 527.5L367.72 527.5L366.68 528.5L366.68 532.5L367.72 533.5L370.85 533.5L371.89 532.5M374.5 524.5L374.5 530.5M374.5 533L374.5 533.5" stroke="#f8f4e8" fill="none" stroke-width="1" stroke-linecap="square"/><path d="M405.5 572.5L405.5 579.5L404.5 580.5L401.5 580.5L400.5 579.5M405.5 573.5L404.5 572.5L401.5 572.5L400.5 573.5L400.5 577.5L401.5 578.5L404.5 578.5L405.5 577.5M408 572.5L408 578.5M408 573.5L409 572.5L412 572.5L413 573.5L413 578.5M420.5 569.5L420.5 578.5M420.5 573.5L419.5 572.5L416.5 572.5L415.5 573.5L415.5 577.5L416.5 578.5L419.5 578.5L420.5 577.5" stroke="#ff2828" fill="none" stroke-width="1" stroke-linecap="square"/><path d="M467.5 444.5L471.26 455.5L475.03 444.5M478.16 446.33L480.05 444.5L483.81 444.5L485.69 446.33L485.69 448.78L478.16 455.5L485.69 455.5M498.86 445.72L488.83 450.61L498.86 455.5M503.88 444.5L507.65 444.5L509.53 446.33L509.53 453.67L507.65 455.5L503.88 455.5L502 453.67L502 446.33L503.88 444.5M509.53 445.72L502 454.28M512.66 447.56L512.66 448.17M512.66 454.89L512.66 455.5M515.8 444.5L523.33 444.5L519.56 448.78L521.45 448.78L523.33 450.61L523.33 453.67L521.45 455.5L517.68 455.5L515.8 453.67M526.46 445.72L536.5 450.61L526.46 455.5" stroke="#f0f060" fill="none" stroke-width="1" stroke-linecap="square"/><path d="M506.5 487.5L509.06 493.5L511.63 487.5M519.32 484.5L519.32 493.5M519.32 488.5L518.29 487.5L515.22 487.5L514.19 488.5L514.19 492.5L515.22 493.5L518.29 493.5L519.32 492.5M527.01 488.5L525.99 487.5L522.91 487.5L521.88 488.5L521.88 492.5L522.91 493.5L525.99 493.5L527.01 492.5M529.58 488.5L537.78 488.5M529.58 491.5L537.78 491.5M541.88 484.5L544.96 484.5L546.5 486L546.5 492L544.96 493.5L541.88 493.5L540.35 492L540.35 486L541.88 484.5M546.5 485.5L540.35 492.5" stroke="#e8a060" fill="none" stroke-width="1" stroke-linecap="square"/><path d="M421.84 525.5L413.5 529.5L421.84 533.5M426.53 524.5L426.53 528.5M424.45 525.5L428.62 527.5M424.45 527.5L428.62 525.5M435.4 533.5L435.4 524.5L431.23 530.5L437.48 530.5M440.09 525.5L448.43 529.5L440.09 533.5M456.25 527.5L456.25 534.5L455.21 535.5L452.08 535.5L451.04 534.5M456.25 528.5L455.21 527.5L452.08 527.5L451.04 528.5L451.04 532.5L452.08 533.5L455.21 533.5L456.25 532.5M458.86 527.5L458.86 533.5M458.86 528.5L459.9 527.5L463.03 527.5L464.07 528.5L464.07 533.5M471.89 524.5L471.89 533.5M471.89 528.5L470.85 527.5L467.72 527.5L466.68 528.5L466.68 532.5L467.72 533.5L470.85 533.5L471.89 532.5M474.5 524.5L474.5 530.5M474.5 533L474.5 533.5" stroke="#f8f4e8" fill="none" stroke-width="1" stroke-linecap="square"/><path d="M505.5 572.5L505.5 579.5L504.5 580.5L501.5 580.5L500.5 579.5M505.5 573.5L504.5 572.5L501.5 572.5L500.5 573.5L500.5 577.5L501.5 578.5L504.5 578.5L505.5 577.5M508 572.5L508 578.5M508 573.5L509 572.5L512 572.5L513 573.5L513 578.5M520.5 569.5L520.5 578.5M520.5 573.5L519.5 572.5L516.5 572.5L515.5 573.5L515.5 577.5L516.5 578.5L519.5 578.5L520.5 577.5" stroke="#ff2828" fill="none" stroke-width="1" stroke-linecap="square"/><path d="M567.5 444.5L571.26 455.5L575.03 444.5M585.69 444.5L578.16 444.5L578.16 449.39L583.18 449.39L585.69 451.83L585.69 453.06L583.18 455.5L579.42 455.5L578.16 454.28M598.86 445.72L588.83 450.61L598.86 455.5M603.88 444.5L607.65 444.5L609.53 446.33L609.53 453.67L607.65 455.5L603.88 455.5L602 453.67L602 446.33L603.88 444.5M609.53 445.72L602 454.28M612.66 447.56L612.66 448.17M612.66 454.89L612.66 455.5M615.8 444.5L623.33 444.5L619.56 448.78L621.45 448.78L623.33 450.61L623.33 453.67L621.45 455.5L617.68 455.5L615.8 453.67M626.46 445.72L636.5 450.61L626.46 455.5" stroke="#f0f060" fill="none" stroke-width="1" stroke-linecap="square"/><path d="M606.5 487.5L609.06 493.5L611.63 487.5M619.32 484.5L619.32 493.5M619.32 488.5L618.29 487.5L615.22 487.5L614.19 488.5L614.19 492.5L615.22 493.5L618.29 493.5L619.32 492.5M627.01 488.5L625.99 487.5L622.91 487.5L621.88 488.5L621.88 492.5L622.91 493.5L625.99 493.5L627.01 492.5M629.58 488.5L637.78 488.5M629.58 491.5L637.78 491.5M646.5 484.5L640.35 484.5L640.35 488.5L644.45 488.5L646.5 490.5L646.5 491.5L644.45 493.5L641.37 493.5L640.35 492.5" stroke="#e8a060" fill="none" stroke-width="1" stroke-linecap="square"/><path d="M521.84 525.5L513.5 529.5L521.84 533.5M526.53 524.5L526.53 528.5M524.45 525.5L528.62 527.5M524.45 527.5L528.62 525.5M535.4 533.5L535.4 524.5L531.23 530.5L537.48 530.5M540.09 525.5L548.43 529.5L540.09 533.5M556.25 527.5L556.25 534.5L555.21 535.5L552.08 535.5L551.04 534.5M556.25 528.5L555.21 527.5L552.08 527.5L551.04 528.5L551.04 532.5L552.08 533.5L555.21 533.5L556.25 532.5M558.86 527.5L558.86 533.5M558.86 528.5L559.9 527.5L563.03 527.5L564.07 528.5L564.07 533.5M571.89 524.5L571.89 533.5M571.89 528.5L570.85 527.5L567.72 527.5L566.68 528.5L566.68 532.5L567.72 533.5L570.85 533.5L571.89 532.5M574.5 524.5L574.5 530.5M574.5 533L574.5 533.5" stroke="#f8f4e8" fill="none" stroke-width="1" stroke-linecap="square"/><path d="M605.5 572.5L605.5 579.5L604.5 580.5L601.5 580.5L600.5 579.5M605.5 573.5L604.5 572.5L601.5 572.5L600.5 573.5L600.5 577.5L601.5 578.5L604.5 578.5L605.5 577.5M608 572.5L608 578.5M608 573.5L609 572.5L612 572.5L613 573.5L613 578.5M620.5 569.5L620.5 578.5M620.5 573.5L619.5 572.5L616.5 572.5L615.5 573.5L615.5 577.5L616.5 578.5L619.5 578.5L620.5 577.5" stroke="#ff2828" fill="none" stroke-width="1" stroke-linecap="square"/><path d="M667.5 444.5L671.26 455.5L675.03 444.5M683.18 455.5L683.18 444.5L678.16 451.83L685.69 451.83M698.86 445.72L688.83 450.61L698.86 455.5M703.88 444.5L707.65 444.5L709.53 446.33L709.53 453.67L707.65 455.5L703.88 455.5L702 453.67L702 446.33L703.88 444.5M709.53 445.72L702 454.28M712.66 447.56L712.66 448.17M712.66 454.89L712.66 455.5M715.8 444.5L723.33 444.5L719.56 448.78L721.45 448.78L723.33 450.61L723.33 453.67L721.45 455.5L717.68 455.5L715.8 453.67M726.46 445.72L736.5 450.61L726.46 455.5" stroke="#f0f060" fill="none" stroke-width="1" stroke-linecap="square"/><path d="M706.5 487.5L709.06 493.5L711.63 487.5M719.32 484.5L719.32 493.5M719.32 488.5L718.29 487.5L715.22 487.5L714.19 488.5L714.19 492.5L715.22 493.5L718.29 493.5L719.32 492.5M727.01 488.5L725.99 487.5L722.91 487.5L721.88 488.5L721.88 492.5L722.91 493.5L725.99 493.5L727.01 492.5M729.58 488.5L737.78 488.5M729.58 491.5L737.78 491.5M741.88 484.5L744.96 484.5L746.5 486L746.5 492L744.96 493.5L741.88 493.5L740.35 492L740.35 486L741.88 484.5M746.5 485.5L740.35 492.5" stroke="#e8a060" fill="none" stroke-width="1" stroke-linecap="square"/><path d="M621.84 525.5L613.5 529.5L621.84 533.5M626.53 524.5L626.53 528.5M624.45 525.5L628.62 527.5M624.45 527.5L628.62 525.5M635.4 533.5L635.4 524.5L631.23 530.5L637.48 530.5M640.09 525.5L648.43 529.5L640.09 533.5M656.25 527.5L656.25 534.5L655.21 535.5L652.08 535.5L651.04 534.5M656.25 528.5L655.21 527.5L652.08 527.5L651.04 528.5L651.04 532.5L652.08 533.5L655.21 533.5L656.25 532.5M658.86 527.5L658.86 533.5M658.86 528.5L659.9 527.5L663.03 527.5L664.07 528.5L664.07 533.5M671.89 524.5L671.89 533.5M671.89 528.5L670.85 527.5L667.72 527.5L666.68 528.5L666.68 532.5L667.72 533.5L670.85 533.5L671.89 532.5M674.5 524.5L674.5 530.5M674.5 533L674.5 533.5" stroke="#f8f4e8" fill="none" stroke-width="1" stroke-linecap="square"/><path d="M705.5 572.5L705.5 579.5L704.5 580.5L701.5 580.5L700.5 579.5M705.5 573.5L704.5 572.5L701.5 572.5L700.5 573.5L700.5 577.5L701.5 578.5L704.5 578.5L705.5 577.5M708 572.5L708 578.5M708 573.5L709 572.5L712 572.5L713 573.5L713 578.5M720.5 569.5L720.5 578.5M720.5 573.5L719.5 572.5L716.5 572.5L715.5 573.5L715.5 577.5L716.5 578.5L719.5 578.5L720.5 577.5" stroke="#ff2828" fill="none" stroke-width="1" stroke-linecap="square"/><path d="M378.5 532.5L383.33 532.5M380.92 532.5L380.92 543.5M378.5 543.5L383.33 543.5M392.39 532.5L388.16 532.5L386.35 534.33L386.35 541.67L388.16 543.5L391.78 543.5L393.59 541.67L393.59 539.83L391.78 538L386.35 538M406.27 533.72L396.61 538.61L406.27 543.5M411.1 532.5L414.73 532.5L416.54 534.33L416.54 541.67L414.73 543.5L411.1 543.5L409.29 541.67L409.29 534.33L411.1 532.5M416.54 533.72L409.29 542.28M419.56 535.56L419.56 536.17M419.56 542.89L419.56 543.5M422.58 532.5L429.82 532.5L426.2 536.78L428.01 536.78L429.82 538.61L429.82 541.67L428.01 543.5L424.39 543.5L422.58 541.67M432.84 533.72L442.5 538.61L432.84 543.5" stroke="#f0f060" fill="none" stroke-width="1" stroke-linecap="square"/><path d="M478.5 532.5L483.41 532.5M480.95 532.5L480.95 543.5M478.5 543.5L483.41 543.5M486.47 532.5L493.83 532.5L488.92 543.5M506.71 533.72L496.9 538.61L506.71 543.5M511.61 532.5L515.29 532.5L517.13 534.33L517.13 541.67L515.29 543.5L511.61 543.5L509.77 541.67L509.77 534.33L511.61 532.5M517.13 533.72L509.77 542.28M520.2 535.56L520.2 536.17M520.2 542.89L520.2 543.5M523.26 532.5L530.62 532.5L526.94 536.78L528.78 536.78L530.62 538.61L530.62 541.67L528.78 543.5L525.1 543.5L523.26 541.67M533.69 533.72L543.5 538.61L533.69 543.5" stroke="#f0f060" fill="none" stroke-width="1" stroke-linecap="square"/><path d="M577.5 532.5L582.39 532.5M579.94 532.5L579.94 543.5M577.5 543.5L582.39 543.5" stroke="#f0f060" fill="none" stroke-width="1" stroke-linecap="square"/><path d="M587.12 534.33L588.99 532.5L588.99 543.5M586.5 543.5L591.48 543.5M599.58 543.5L599.58 532.5L594.59 539.83L602.07 539.83M615.14 533.72L605.18 538.61L615.14 543.5M620.12 532.5L623.86 532.5L625.73 534.33L625.73 541.67L623.86 543.5L620.12 543.5L618.25 541.67L618.25 534.33L620.12 532.5M625.73 533.72L618.25 542.28M628.84 535.56L628.84 536.17M628.84 542.89L628.84 543.5M631.95 532.5L639.42 532.5L635.69 536.78L637.56 536.78L639.42 538.61L639.42 541.67L637.56 543.5L633.82 543.5L631.95 541.67M642.54 533.72L652.5 538.61L642.54 543.5" stroke="#f0f060" fill="none" stroke-width="1" stroke-linecap="square"/><path d="M677.5 532.5L682.39 532.5M679.94 532.5L679.94 543.5M677.5 543.5L682.39 543.5" stroke="#f0f060" fill="none" stroke-width="1" stroke-linecap="square"/><path d="M687.12 534.33L688.99 532.5L688.99 543.5M686.5 543.5L691.48 543.5M694.59 532.5L702.07 532.5L698.33 536.78L700.2 536.78L702.07 538.61L702.07 541.67L700.2 543.5L696.46 543.5L694.59 541.67M715.14 533.72L705.18 538.61L715.14 543.5M720.12 532.5L723.86 532.5L725.73 534.33L725.73 541.67L723.86 543.5L720.12 543.5L718.25 541.67L718.25 534.33L720.12 532.5M725.73 533.72L718.25 542.28M728.84 535.56L728.84 536.17M728.84 542.89L728.84 543.5M731.95 532.5L739.42 532.5L735.69 536.78L737.56 536.78L739.42 538.61L739.42 541.67L737.56 543.5L733.82 543.5L731.95 541.67M742.54 533.72L752.5 538.61L742.54 543.5" stroke="#f0f060" fill="none" stroke-width="1" stroke-linecap="square"/><path d="M285.5 468.5L285.5 476.5L290.61 476.5L291.64 475.61L291.64 473.83L290.61 472.5L285.5 472.5M285.5 468.5L290.61 468.5L291.64 469.39L291.64 471.61L290.61 472.5M302.38 469.39L294.19 472.94L302.38 476.5M306.47 468.5L309.53 468.5L311.07 469.83L311.07 475.17L309.53 476.5L306.47 476.5L304.93 475.17L304.93 469.83L306.47 468.5M311.07 469.39L304.93 475.61M313.62 470.72L313.62 471.17M313.62 476.06L313.62 476.5M316.18 469.83L317.72 468.5L320.78 468.5L322.32 469.83L322.32 471.61L316.18 476.5L322.32 476.5M324.88 469.39L333.06 472.94L324.88 476.5M336.64 475.61L336.64 476.5L335.61 478.28M339.19 468.5L339.19 476.5L344.31 476.5L345.33 475.61L345.33 473.83L344.31 472.5L339.19 472.5M339.19 468.5L344.31 468.5L345.33 469.39L345.33 471.61L344.31 472.5M356.07 469.39L347.89 472.94L356.07 476.5M358.62 468.5L364.76 468.5L360.67 476.5M367.32 469.39L375.5 472.94L367.32 476.5" stroke="#f8f4e8" fill="none" stroke-width="1" stroke-linecap="square"/><path d="M428.5 468.5L428.5 476.5L433.66 476.5L434.69 475.61L434.69 473.83L433.66 472.5L428.5 472.5M428.5 468.5L433.66 468.5L434.69 469.39L434.69 471.61L433.66 472.5M445.53 469.39L437.27 472.94L445.53 476.5M448.11 468.5L454.31 468.5L451.21 471.61L452.76 471.61L454.31 472.94L454.31 475.17L452.76 476.5L449.66 476.5L448.11 475.17M456.89 470.72L456.89 471.17M456.89 476.06L456.89 476.5M464.63 468.5L461.02 468.5L459.47 469.83L459.47 475.17L461.02 476.5L464.11 476.5L465.66 475.17L465.66 473.83L464.11 472.5L459.47 472.5M468.24 469.39L476.5 472.94L468.24 476.5" stroke="#f8f4e8" fill="none" stroke-width="1" stroke-linecap="square"/><path d="M527.5 476.5L527.5 474.28L531.04 468.5L534.57 474.28L534.57 476.5M527.5 474.28L534.57 474.28M545.18 469.39L537.1 472.94L545.18 476.5M549.23 468.5L552.26 468.5L553.77 469.83L553.77 475.17L552.26 476.5L549.23 476.5L547.71 475.17L547.71 469.83L549.23 468.5M553.77 469.39L547.71 475.61M556.3 470.72L556.3 471.17M556.3 476.06L556.3 476.5M558.83 468.5L564.89 468.5L561.86 471.61L563.37 471.61L564.89 472.94L564.89 475.17L563.37 476.5L560.34 476.5L558.83 475.17M567.42 469.39L575.5 472.94L567.42 476.5" stroke="#f8f4e8" fill="none" stroke-width="1" stroke-linecap="square"/><path d="M627.5 476.5L627.5 474.28L631.04 468.5L634.57 474.28L634.57 476.5M627.5 474.28L634.57 474.28M645.18 469.39L637.1 472.94L645.18 476.5M651.75 476.5L651.75 468.5L647.71 473.83L653.77 473.83M656.3 470.72L656.3 471.17M656.3 476.06L656.3 476.5M658.83 468.5L664.89 468.5L660.85 476.5M667.42 469.39L675.5 472.94L667.42 476.5" stroke="#f8f4e8" fill="none" stroke-width="1" stroke-linecap="square"/><path d="M1123.5 376.5L1123.5 370.99M1123.5 373.75L1134.5 373.75M1134.5 376.5L1134.5 370.99M1123.5 359.28L1123.5 367.55L1128.39 367.55L1128.39 362.04L1130.83 359.28L1132.06 359.28L1134.5 362.04L1134.5 366.17L1133.28 367.55M1124.72 344.82L1129.61 355.84L1134.5 344.82M1123.5 339.31L1123.5 335.18L1125.33 333.11L1132.67 333.11L1134.5 335.18L1134.5 339.31L1132.67 341.38L1125.33 341.38L1123.5 339.31M1124.72 333.11L1133.28 341.38M1126.56 329.67L1127.17 329.67M1133.89 329.67L1134.5 329.67M1123.5 326.23L1123.5 317.96L1134.5 323.47M1124.72 314.52L1129.61 303.5L1134.5 314.52" stroke="#f0f060" fill="none" stroke-width="1" stroke-linecap="square"/><path d="M917.5 177.5L917.5 184.5L916.5 185.5L913.5 185.5L912.5 184.5M917.5 178.5L916.5 177.5L913.5 177.5L912.5 178.5L912.5 182.5L913.5 183.5L916.5 183.5L917.5 182.5M920 177.5L920 183.5M920 178.5L921 177.5L924 177.5L925 178.5L925 183.5M932.5 174.5L932.5 183.5M932.5 178.5L931.5 177.5L928.5 177.5L927.5 178.5L927.5 182.5L928.5 183.5L931.5 183.5L932.5 182.5" stroke="#ff2828" fill="none" stroke-width="1" stroke-linecap="square"/><path d="M903.5 324.5L912.5 324.5L912.5 318.67L911.5 317.5L909.5 317.5L908 318.67L908 324.5M903.5 324.5L903.5 318.67L904.5 317.5L907 317.5L908 318.67" stroke="#ff2828" fill="none" stroke-width="1" stroke-linecap="square"/><path d="M912.5 414.5L910 414.5L903.5 411L910 407.5L912.5 407.5M910 414.5L910 407.5" stroke="#ff2828" fill="none" stroke-width="1" stroke-linecap="square"/><path d="M949.33 312.38L947.5 314.16L947.5 317.72L949.33 319.5L956.67 319.5L958.5 317.72L958.5 314.16L956.67 312.38M951.78 309.41L958.5 309.41M948.11 309.41L948.72 309.41M951.17 306.44L958.5 306.44M952.39 306.44L951.17 305.25L951.17 301.69L952.39 300.5L958.5 300.5" stroke="#ff2828" fill="none" stroke-width="1" stroke-linecap="square"/><path d="M949.33 429.39L947.5 430.92L947.5 433.97L949.33 435.5L956.67 435.5L958.5 433.97L958.5 430.92L956.67 429.39M951.17 425.83L951.17 422.77L952.39 421.75L957.28 421.75L958.5 422.77L958.5 425.83L957.28 426.85L952.39 426.85L951.17 425.83M951.17 419.21L957.28 419.21L958.5 418.19L958.5 415.14L957.28 414.12M951.17 414.12L958.5 414.12M947.5 410.05L957.28 410.05L958.5 409.03L958.5 407.5M951.17 411.57L951.17 407.5" stroke="#ff2828" fill="none" stroke-width="1" stroke-linecap="square"/><path d="M969.33 372.86L967.5 374.77L967.5 378.59L969.33 380.5L971.17 380.5L973 378.59L973 374.77L974.83 372.86L976.67 372.86L978.5 374.77L978.5 378.59L976.67 380.5M971.17 369.68L977.28 369.68L978.5 368.41L978.5 364.59L977.28 363.32M971.17 363.32L978.5 363.32M971.17 360.14L978.5 360.14M972.39 360.14L971.17 358.86L971.17 357.59L972.39 356.32L978.5 356.32M972.39 356.32L971.17 355.05L971.17 353.77L972.39 352.5L978.5 352.5" stroke="#ff2828" fill="none" stroke-width="1" stroke-linecap="square"/><path d="M944.5 405.5L933.5 405.5L939.61 402.32L933.5 399.14L944.5 399.14M933.5 396.86L933.5 393.23M933.5 395.05L944.5 395.05M944.5 396.86L944.5 393.23M933.5 390.95L944.5 390.95L944.5 385.5" stroke="#f8f4e8" fill="none" stroke-width="1" stroke-linecap="square"/><path d="M933.5 350.77L933.5 347.3L935.33 345.57L937.17 345.57L939 347.3L939 350.77L940.83 352.5L942.67 352.5L944.5 350.77L944.5 347.3L942.67 345.57L940.83 345.57L939 347.3M939 350.77L937.17 352.5L935.33 352.5L933.5 350.77M933.5 342.68L944.5 342.68M938.39 342.68L937.17 341.52L937.17 338.06L938.39 336.9L943.28 336.9L944.5 338.06L944.5 341.52L943.28 342.68M937.78 334.01L944.5 334.01M934.11 334.01L934.72 334.01M933.5 329.39L943.28 329.39L944.5 328.23L944.5 326.5M937.17 331.12L937.17 326.5" stroke="#f8f4e8" fill="none" stroke-width="1" stroke-linecap="square"/><path d="M948.5 398.79L948.5 405.5L959.5 405.5M954 405.5L954 401.03M952.17 396L958.28 396L959.5 394.88L959.5 391.52L958.28 390.41M952.17 390.41L959.5 390.41M948.5 387.61L959.5 387.61M948.5 384.81L959.5 384.81M959.5 375.87L956.44 375.87L948.5 371.96L956.44 368.04L959.5 368.04M956.44 375.87L956.44 368.04M948.5 359.66L959.5 359.66M953.39 359.66L952.17 360.78L952.17 364.13L953.39 365.25L958.28 365.25L959.5 364.13L959.5 360.78L958.28 359.66M948.5 351.27L959.5 351.27M953.39 351.27L952.17 352.39L952.17 355.74L953.39 356.86L958.28 356.86L959.5 355.74L959.5 352.39L958.28 351.27M955.83 348.48L955.83 342.89L953.39 342.89L952.17 344L952.17 347.36L953.39 348.48L958.28 348.48L959.5 347.36L959.5 344L958.28 342.89M952.17 340.09L959.5 340.09M954.61 340.09L952.17 337.85L952.17 335.62L953.39 334.5" stroke="#f8f4e8" fill="none" stroke-width="1" stroke-linecap="square"/><path d="M1122.5 449.5L1124.88 455.5L1127.25 449.5M1134.38 446.5L1134.38 455.5M1134.38 450.5L1133.42 449.5L1130.58 449.5L1129.62 450.5L1129.62 454.5L1130.58 455.5L1133.42 455.5L1134.38 454.5M1141.5 446.5L1141.5 455.5M1141.5 450.5L1140.55 449.5L1137.7 449.5L1136.75 450.5L1136.75 454.5L1137.7 455.5L1140.55 455.5L1141.5 454.5" stroke="#ff2828" fill="none" stroke-width="1" stroke-linecap="square"/><path d="M1073.5 503.5L1076.5 509.5L1079.5 503.5M1088.5 500.5L1088.5 509.5M1088.5 504.5L1087.3 503.5L1083.7 503.5L1082.5 504.5L1082.5 508.5L1083.7 509.5L1087.3 509.5L1088.5 508.5M1097.5 500.5L1097.5 509.5M1097.5 504.5L1096.3 503.5L1092.7 503.5L1091.5 504.5L1091.5 508.5L1092.7 509.5L1096.3 509.5L1097.5 508.5M1100.5 500.5L1100.5 506.5M1100.5 509L1100.5 509.5" stroke="#f8f4e8" fill="none" stroke-width="1" stroke-linecap="square"/><path d="M1118.5 501.5L1121.6 510.5L1124.71 501.5M1128.84 501.5L1131.95 501.5L1133.5 503L1133.5 509L1131.95 510.5L1128.84 510.5L1127.29 509L1127.29 503L1128.84 501.5M1133.5 502.5L1127.29 509.5" stroke="#ff2828" fill="none" stroke-width="1" stroke-linecap="square"/><path d="M1130.5 521.5L1133.06 527.5L1135.63 521.5M1143.32 518.5L1143.32 527.5M1143.32 522.5L1142.29 521.5L1139.22 521.5L1138.19 522.5L1138.19 526.5L1139.22 527.5L1142.29 527.5L1143.32 526.5M1151.01 522.5L1149.99 521.5L1146.91 521.5L1145.88 522.5L1145.88 526.5L1146.91 527.5L1149.99 527.5L1151.01 526.5M1153.58 522.5L1161.78 522.5M1153.58 525.5L1161.78 525.5M1170.5 518.5L1164.35 518.5L1164.35 522.5L1168.45 522.5L1170.5 524.5L1170.5 525.5L1168.45 527.5L1165.37 527.5L1164.35 526.5" stroke="#e8a060" fill="none" stroke-width="1" stroke-linecap="square"/><path d="M1078.5 560.5L1078.5 567.5L1077.3 568.5L1073.7 568.5L1072.5 567.5M1078.5 561.5L1077.3 560.5L1073.7 560.5L1072.5 561.5L1072.5 565.5L1073.7 566.5L1077.3 566.5L1078.5 565.5M1081.5 560.5L1081.5 566.5M1081.5 561.5L1082.7 560.5L1086.3 560.5L1087.5 561.5L1087.5 566.5M1096.5 557.5L1096.5 566.5M1096.5 561.5L1095.3 560.5L1091.7 560.5L1090.5 561.5L1090.5 565.5L1091.7 566.5L1095.3 566.5L1096.5 565.5M1099.5 557.5L1099.5 563.5M1099.5 566L1099.5 566.5" stroke="#f8f4e8" fill="none" stroke-width="1" stroke-linecap="square"/><path d="M1128.25 605.5L1128.25 612.5L1127.3 613.5L1124.45 613.5L1123.5 612.5M1128.25 606.5L1127.3 605.5L1124.45 605.5L1123.5 606.5L1123.5 610.5L1124.45 611.5L1127.3 611.5L1128.25 610.5M1130.62 605.5L1130.62 611.5M1130.62 606.5L1131.58 605.5L1134.42 605.5L1135.38 606.5L1135.38 611.5M1142.5 602.5L1142.5 611.5M1142.5 606.5L1141.55 605.5L1138.7 605.5L1137.75 606.5L1137.75 610.5L1138.7 611.5L1141.55 611.5L1142.5 610.5" stroke="#ff2828" fill="none" stroke-width="1" stroke-linecap="square"/><path d="M389 467V321H861" stroke="#0000ff" stroke-width="14" fill="none" stroke-linejoin="round"/><path d="M489 467V321" stroke="#0000ff" stroke-width="14" fill="none"/><path d="M589 467V410H861" stroke="#0000ff" stroke-width="14" fill="none" stroke-linejoin="round"/><path d="M689 467V410" stroke="#0000ff" stroke-width="14" fill="none"/><path d="M1032 366H1148" stroke="#0000ff" stroke-width="14" fill="none"/><circle cx="488.5" cy="321" r="10.5" fill="#5ab8f0"/><circle cx="688.5" cy="410" r="10.5" fill="#5ab8f0"/><path d="M382 321H861M589 410H861" stroke="#0000ff" stroke-width="14" fill="none"/><path d="M489 467V321M689 467V403" stroke="#0000ff" stroke-width="14" fill="none"/><path d="M388.5 471L388.5 488" stroke="#40c080" stroke-width="1"/><circle cx="388.5" cy="499.5" r="11.6" stroke="#40c080" fill="none"/><path d="M385 493.5L392 493.5" stroke="#40c080" stroke-width="1"/><path d="M388.5 490L388.5 497.5" stroke="#40c080" stroke-width="1"/><path d="M385 504.5L392 504.5" stroke="#40c080" stroke-width="1"/><path d="M388.5 511L388.5 528" stroke="#40c080" stroke-width="1"/><rect x="387" y="538" width="3" height="12" fill="#0000ff"/><path d="M388.5 560L388.5 588.5" stroke="#40c080" stroke-width="1"/><path d="M377 588.5H400L388.5 599.5Z" stroke="#40c080" fill="none"/><rect x="384" y="461" width="10" height="10" fill="#ff0000"/><rect x="384" y="528" width="10" height="10" fill="#ff0000"/><rect x="384" y="550" width="10" height="10" fill="#ff0000"/><path d="M488.5 471L488.5 488" stroke="#40c080" stroke-width="1"/><circle cx="488.5" cy="499.5" r="11.6" stroke="#40c080" fill="none"/><path d="M485 493.5L492 493.5" stroke="#40c080" stroke-width="1"/><path d="M488.5 490L488.5 497.5" stroke="#40c080" stroke-width="1"/><path d="M485 504.5L492 504.5" stroke="#40c080" stroke-width="1"/><path d="M488.5 511L488.5 528" stroke="#40c080" stroke-width="1"/><rect x="487" y="538" width="3" height="12" fill="#0000ff"/><path d="M488.5 560L488.5 588.5" stroke="#40c080" stroke-width="1"/><path d="M477 588.5H500L488.5 599.5Z" stroke="#40c080" fill="none"/><rect x="484" y="461" width="10" height="10" fill="#ff0000"/><rect x="484" y="528" width="10" height="10" fill="#ff0000"/><rect x="484" y="550" width="10" height="10" fill="#ff0000"/><path d="M588.5 471L588.5 488" stroke="#40c080" stroke-width="1"/><circle cx="588.5" cy="499.5" r="11.6" stroke="#40c080" fill="none"/><path d="M585 493.5L592 493.5" stroke="#40c080" stroke-width="1"/><path d="M588.5 490L588.5 497.5" stroke="#40c080" stroke-width="1"/><path d="M585 504.5L592 504.5" stroke="#40c080" stroke-width="1"/><path d="M588.5 511L588.5 528" stroke="#40c080" stroke-width="1"/><rect x="587" y="538" width="3" height="12" fill="#0000ff"/><path d="M588.5 560L588.5 588.5" stroke="#40c080" stroke-width="1"/><path d="M577 588.5H600L588.5 599.5Z" stroke="#40c080" fill="none"/><rect x="584" y="461" width="10" height="10" fill="#ff0000"/><rect x="584" y="528" width="10" height="10" fill="#ff0000"/><rect x="584" y="550" width="10" height="10" fill="#ff0000"/><path d="M688.5 471L688.5 488" stroke="#40c080" stroke-width="1"/><circle cx="688.5" cy="499.5" r="11.6" stroke="#40c080" fill="none"/><path d="M685 493.5L692 493.5" stroke="#40c080" stroke-width="1"/><path d="M688.5 490L688.5 497.5" stroke="#40c080" stroke-width="1"/><path d="M685 504.5L692 504.5" stroke="#40c080" stroke-width="1"/><path d="M688.5 511L688.5 528" stroke="#40c080" stroke-width="1"/><rect x="687" y="538" width="3" height="12" fill="#0000ff"/><path d="M688.5 560L688.5 588.5" stroke="#40c080" stroke-width="1"/><path d="M677 588.5H700L688.5 599.5Z" stroke="#40c080" fill="none"/><rect x="684" y="461" width="10" height="10" fill="#ff0000"/><rect x="684" y="528" width="10" height="10" fill="#ff0000"/><rect x="684" y="550" width="10" height="10" fill="#ff0000"/><path d="M900.5 276.5L989.5 298.5V432.5L900.5 453.5V387.5L922.5 365.5L900.5 343.5Z" stroke="#40c080" fill="none"/><path d="M944.5 165L944.5 287" stroke="#40c080" stroke-width="1"/><path d="M933 165.5H956L944.5 154.5Z" stroke="#40c080" fill="none"/><rect x="943" y="204" width="3" height="34" fill="#0000ff"/><rect x="940" y="194" width="10" height="10" fill="#ff0000"/><rect x="940" y="238" width="10" height="10" fill="#ff0000"/><path d="M861 321.5L900 321.5" stroke="#40c080" stroke-width="1"/><path d="M861 410.5L900 410.5" stroke="#40c080" stroke-width="1"/><rect x="851" y="316" width="10" height="10" fill="#ff0000"/><rect x="851" y="405" width="10" height="10" fill="#ff0000"/><path d="M944.5 443L944.5 483" stroke="#40c080" stroke-width="1"/><path d="M945.5 492V542.5H997" stroke="#0000ff" stroke-width="4" fill="none"/><rect x="940" y="483" width="10" height="10" fill="#ff0000"/><rect x="996" y="539" width="10" height="10" fill="#ff0000"/><path d="M1006 543.5L1034 543.5" stroke="#40c080" stroke-width="1"/><path d="M1034.5 532.5H1056.5V554.5H1034.5ZM1034.5 532.5L1056.5 554.5M1056.5 532.5L1034.5 554.5" stroke="#40c080" fill="none"/><path d="M990 365.5L1029 365.5" stroke="#40c080" stroke-width="1"/><rect x="1029" y="361" width="10" height="10" fill="#ff0000"/><rect x="1140" y="361" width="10" height="10" fill="#ff0000"/><path d="M1150 365.5L1178 365.5" stroke="#40c080" stroke-width="1"/><path d="M1178.5 354.5H1201.5V376.5H1178.5ZM1178.5 354.5L1201.5 376.5M1201.5 354.5L1178.5 376.5" stroke="#40c080" fill="none"/><path d="M1084 432.5L1140 432.5" stroke="#40c080" stroke-width="1"/><path d="M1111.5 432L1111.5 472" stroke="#40c080" stroke-width="1"/><rect x="1107" y="472" width="10" height="10" fill="#ff0000"/><rect x="1107" y="493" width="10" height="10" fill="#ff0000"/><rect x="1110" y="482" width="3" height="12" fill="#0000ff"/><path d="M1111.5 503L1111.5 520" stroke="#40c080" stroke-width="1"/><circle cx="1111.5" cy="531.5" r="11.6" stroke="#40c080" fill="none"/><path d="M1108 525.5L1115 525.5" stroke="#40c080" stroke-width="1"/><path d="M1111.5 522L1111.5 529.5" stroke="#40c080" stroke-width="1"/><path d="M1108 536.5L1115 536.5" stroke="#40c080" stroke-width="1"/><path d="M1111.5 543L1111.5 561" stroke="#40c080" stroke-width="1"/><rect x="1107" y="561" width="10" height="10" fill="#ff0000"/><rect x="1107" y="583" width="10" height="10" fill="#ff0000"/><rect x="1110" y="571" width="3" height="12" fill="#0000ff"/><path d="M1111.5 593L1111.5 620.5" stroke="#40c080" stroke-width="1"/><path d="M1100 620.5H1123L1111.5 631.5Z" stroke="#40c080" fill="none"/></svg>
<div id="status" class="a">
  <div class="a" style="left:5px;top:4px;width:5px;height:11px;border-left:1px solid #888;border-right:1px solid #888"><div class="a" style="left:1px;top:0;width:1px;height:11px;background:#888"></div></div>
  <span style="left:11px">mouse L: showClickInfo()</span>
  <span style="left:581px">M: schHiMousePopUp()</span>
  <span style="left:1154px">R: schHiMousePopUp()</span>
</div>
<div id="bot" class="a">
  <div class="a" style="left:0;top:0;width:41px;height:14px;background:#f8d8d8;border-right:1px solid #999"></div>
  <span style="left:2px">51(68)</span>
  <div class="a" style="left:1136px;top:4px;width:1px;height:10px;background:#555"></div>
  <span style="left:1144px">Cmd:</span><span style="left:1179px">Sel: 0</span>
  <div class="a" style="left:1215px;top:4px;width:1px;height:10px;background:#555"></div>
  <span style="left:1222px">T=27 C</span>
  <div class="a" style="left:1267px;top:3px;width:7px;height:11px;background:#999;border:1px solid #666"></div>
</div>
</body></html>
